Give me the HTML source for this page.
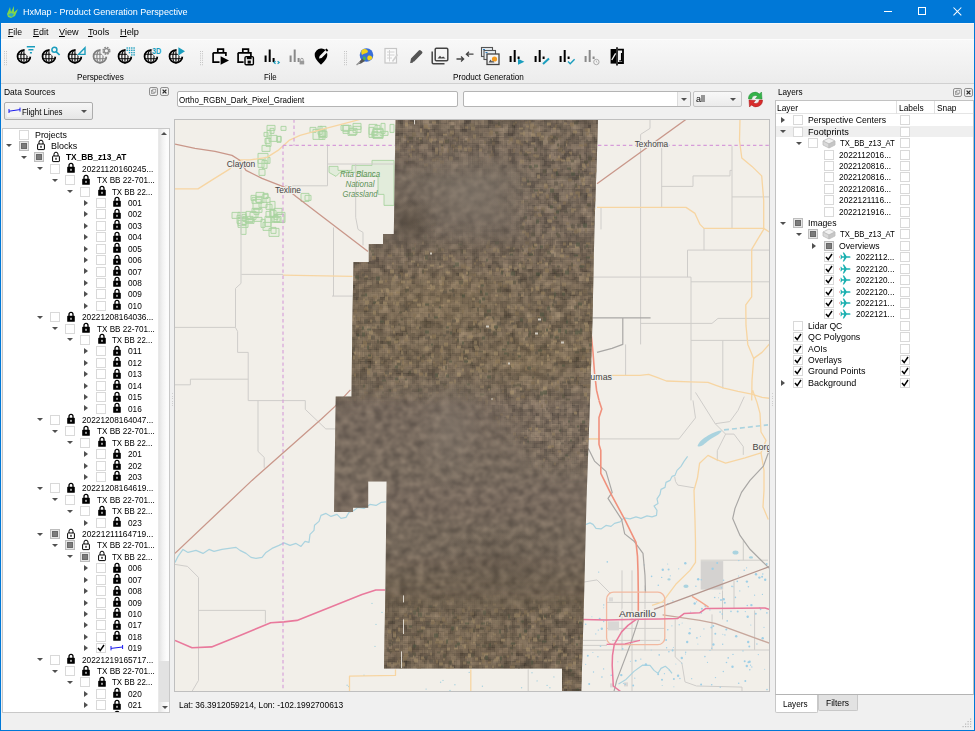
<!DOCTYPE html><html><head><meta charset="utf-8"><title>HxMap</title><style>
*{box-sizing:border-box;margin:0;padding:0}
html,body{width:975px;height:731px;overflow:hidden;background:#f0f0f0;font-family:"Liberation Sans",sans-serif;font-size:9px;color:#000}
.abs{position:absolute}
.t{position:absolute;white-space:nowrap;line-height:12px;height:12px}
#title{position:absolute;left:0;top:0;width:975px;height:23px;background:#0078d7}
#menu{position:absolute;left:1px;top:23px;width:973px;height:16px;background:#f0f0f0;border-top:1px solid #f9f9f9}
#tool{position:absolute;left:1px;top:39px;width:973px;height:45px;background:linear-gradient(#f8f8f8,#f1f1f1 60%,#ececec);border-top:1px solid #fdfdfd;border-bottom:1px solid #d0d0d0}
.cb{position:absolute;width:10px;height:10px;background:#fff;border:1px solid #d9d9d9}
.cbp{position:absolute;width:10px;height:10px;background:#e6e6e6;border:1px solid #bdbdbd}
.cbp:after{content:"";position:absolute;box-sizing:border-box;left:1px;top:1px;width:6px;height:6px;background:#7c7c7c;border:1px solid #686868}
.ar{position:absolute;width:0;height:0}
.ard{border-left:3px solid transparent;border-right:3px solid transparent;border-top:3.6px solid #505050}
.arr{border-top:3.2px solid transparent;border-bottom:3.2px solid transparent;border-left:4px solid #505050}
</style></head><body><div id="title"><svg class="abs" style="left:6px;top:5px" width="13" height="14" viewBox="0 0 13 14"><path d="M1 9 L4 2 L5 7 L8 1 L8 7 L12 4 L9 11 L5 13 L2 12 Z" fill="#7fd44b"/><path d="M2 10 L5 8 L8 9 L6 12 Z" fill="#2aa7c9"/></svg><div class="t" style="left:23.2px;top:5.5px;font-size:9.8px;transform:scaleX(0.9208);transform-origin:0 0;color:#fff;">HxMap - Product Generation Perspective</div><div class="abs" style="left:884px;top:11px;width:8px;height:1px;background:#fff"></div><div class="abs" style="left:918px;top:7px;width:8px;height:8px;border:1px solid #fff"></div><svg class="abs" style="left:952.5px;top:7px" width="9" height="9" viewBox="0 0 9 9"><path d="M0.5 0.5 L8.3 8.3 M8.3 0.5 L0.5 8.3" stroke="#fff" stroke-width="1.05"/></svg></div><div id="menu"><div class="t" style="left:7.2px;top:1.5px;font-size:9.8px;transform:scaleX(0.8866);transform-origin:0 0;"><u>F</u>ile</div><div class="t" style="left:31.8px;top:1.5px;font-size:9.8px;transform:scaleX(0.9120);transform-origin:0 0;"><u>E</u>dit</div><div class="t" style="left:57.5px;top:1.5px;font-size:9.8px;transform:scaleX(0.9258);transform-origin:0 0;"><u>V</u>iew</div><div class="t" style="left:86.8px;top:1.5px;font-size:9.8px;transform:scaleX(0.9267);transform-origin:0 0;"><u>T</u>ools</div><div class="t" style="left:118.6px;top:1.5px;font-size:9.8px;transform:scaleX(0.9378);transform-origin:0 0;"><u>H</u>elp</div></div><div id="tool"><svg class="abs" style="left:3px;top:11px" width="4" height="16"><rect x="0" y="0.0" width="1" height="1" fill="#c4c4c4"/><rect x="2" y="0.0" width="1" height="1" fill="#c4c4c4"/><rect x="0" y="2.2" width="1" height="1" fill="#c4c4c4"/><rect x="2" y="2.2" width="1" height="1" fill="#c4c4c4"/><rect x="0" y="4.4" width="1" height="1" fill="#c4c4c4"/><rect x="2" y="4.4" width="1" height="1" fill="#c4c4c4"/><rect x="0" y="6.6000000000000005" width="1" height="1" fill="#c4c4c4"/><rect x="2" y="6.6000000000000005" width="1" height="1" fill="#c4c4c4"/><rect x="0" y="8.8" width="1" height="1" fill="#c4c4c4"/><rect x="2" y="8.8" width="1" height="1" fill="#c4c4c4"/><rect x="0" y="11.0" width="1" height="1" fill="#c4c4c4"/><rect x="2" y="11.0" width="1" height="1" fill="#c4c4c4"/><rect x="0" y="13.200000000000001" width="1" height="1" fill="#c4c4c4"/><rect x="2" y="13.200000000000001" width="1" height="1" fill="#c4c4c4"/></svg><svg class="abs" style="left:12.5px;top:5.4px" width="24" height="22" viewBox="0 0 24 22"><mask id="gm1"><rect x="0" y="0" width="24" height="22" fill="#fff"/><circle cx="16.6" cy="5.8" r="6" fill="#000"/></mask><g fill="none" stroke="#000" stroke-width="1.8" mask="url(#gm1)"><circle cx="9.95" cy="11.45" r="6.4"/><ellipse cx="9.95" cy="11.45" rx="3.1" ry="6.4" stroke-width="1.05"/><path d="M9.95 5 V17.9 M3.6 9.2 H16.3 M3.6 13.8 H16.3" stroke-width="1.05"/></g><path d="M12.8 1.7 H21 M14.4 4.7 H19.4 M15.9 7.7 H17.9" stroke="#1a9dbd" stroke-width="1.6" fill="none"/></svg><svg class="abs" style="left:38.0px;top:5.4px" width="24" height="22" viewBox="0 0 24 22"><mask id="gm2"><rect x="0" y="0" width="24" height="22" fill="#fff"/><circle cx="16.6" cy="5.8" r="6" fill="#000"/></mask><g fill="none" stroke="#000" stroke-width="1.8" mask="url(#gm2)"><circle cx="9.95" cy="11.45" r="6.4"/><ellipse cx="9.95" cy="11.45" rx="3.1" ry="6.4" stroke-width="1.05"/><path d="M9.95 5 V17.9 M3.6 9.2 H16.3 M3.6 13.8 H16.3" stroke-width="1.05"/></g><circle cx="15.4" cy="4.8" r="2.5" fill="none" stroke="#1a9dbd" stroke-width="1.5"/><path d="M17.3 6.8 L20.6 10" stroke="#1a9dbd" stroke-width="1.7"/></svg><svg class="abs" style="left:63.5px;top:5.4px" width="24" height="22" viewBox="0 0 24 22"><mask id="gm3"><rect x="0" y="0" width="24" height="22" fill="#fff"/><circle cx="16.6" cy="5.8" r="6" fill="#000"/></mask><g fill="none" stroke="#000" stroke-width="1.8" mask="url(#gm3)"><circle cx="9.95" cy="11.45" r="6.4"/><ellipse cx="9.95" cy="11.45" rx="3.1" ry="6.4" stroke-width="1.05"/><path d="M9.95 5 V17.9 M3.6 9.2 H16.3 M3.6 13.8 H16.3" stroke-width="1.05"/></g><path d="M13.4 9.4 L20 2.8 V9.4 Z" fill="none" stroke="#1a9dbd" stroke-width="1.4"/></svg><svg class="abs" style="left:88.5px;top:5.4px" width="24" height="22" viewBox="0 0 24 22"><mask id="gm4"><rect x="0" y="0" width="24" height="22" fill="#fff"/><circle cx="16.6" cy="5.8" r="6" fill="#000"/></mask><g fill="none" stroke="#7d7d7d" stroke-width="1.8" mask="url(#gm4)"><circle cx="9.95" cy="11.45" r="6.4"/><ellipse cx="9.95" cy="11.45" rx="3.1" ry="6.4" stroke-width="1.05"/><path d="M9.95 5 V17.9 M3.6 9.2 H16.3 M3.6 13.8 H16.3" stroke-width="1.05"/></g><circle cx="16.4" cy="5.8" r="3.3" fill="none" stroke="#8c8c8c" stroke-width="1.7" stroke-dasharray="1.7 0.9"/><circle cx="16.4" cy="5.8" r="2.2" fill="none" stroke="#8c8c8c" stroke-width="1.3"/></svg><svg class="abs" style="left:114.0px;top:5.4px" width="24" height="22" viewBox="0 0 24 22"><mask id="gm5"><rect x="0" y="0" width="24" height="22" fill="#fff"/><circle cx="16.6" cy="5.8" r="6" fill="#000"/></mask><g fill="none" stroke="#000" stroke-width="1.8" mask="url(#gm5)"><circle cx="9.95" cy="11.45" r="6.4"/><ellipse cx="9.95" cy="11.45" rx="3.1" ry="6.4" stroke-width="1.05"/><path d="M9.95 5 V17.9 M3.6 9.2 H16.3 M3.6 13.8 H16.3" stroke-width="1.05"/></g><rect x="11.5" y="2.3" width="1.4" height="1.4" fill="#1a9dbd"/><rect x="11.5" y="4.6" width="1.4" height="1.4" fill="#1a9dbd"/><rect x="13.8" y="2.3" width="1.4" height="1.4" fill="#1a9dbd"/><rect x="13.8" y="4.6" width="1.4" height="1.4" fill="#1a9dbd"/><rect x="13.8" y="6.9" width="1.4" height="1.4" fill="#1a9dbd"/><rect x="16.1" y="2.3" width="1.4" height="1.4" fill="#1a9dbd"/><rect x="16.1" y="4.6" width="1.4" height="1.4" fill="#1a9dbd"/><rect x="16.1" y="6.9" width="1.4" height="1.4" fill="#1a9dbd"/><rect x="16.1" y="9.2" width="1.4" height="1.4" fill="#1a9dbd"/><rect x="18.4" y="2.3" width="1.4" height="1.4" fill="#1a9dbd"/><rect x="18.4" y="4.6" width="1.4" height="1.4" fill="#1a9dbd"/><rect x="18.4" y="6.9" width="1.4" height="1.4" fill="#1a9dbd"/><rect x="18.4" y="9.2" width="1.4" height="1.4" fill="#1a9dbd"/></svg><svg class="abs" style="left:139.5px;top:5.4px" width="24" height="22" viewBox="0 0 24 22"><mask id="gm6"><rect x="0" y="0" width="24" height="22" fill="#fff"/><circle cx="16.6" cy="5.8" r="6" fill="#000"/></mask><g fill="none" stroke="#000" stroke-width="1.8" mask="url(#gm6)"><circle cx="9.95" cy="11.45" r="6.4"/><ellipse cx="9.95" cy="11.45" rx="3.1" ry="6.4" stroke-width="1.05"/><path d="M9.95 5 V17.9 M3.6 9.2 H16.3 M3.6 13.8 H16.3" stroke-width="1.05"/></g><text x="11" y="8.9" font-family="Liberation Sans" font-weight="bold" font-size="9.3" fill="#1a9dbd" textLength="9.3" lengthAdjust="spacingAndGlyphs">3D</text></svg><svg class="abs" style="left:165.0px;top:5.4px" width="24" height="22" viewBox="0 0 24 22"><mask id="gm7"><rect x="0" y="0" width="24" height="22" fill="#fff"/><circle cx="16.6" cy="5.8" r="6" fill="#000"/></mask><g fill="none" stroke="#000" stroke-width="1.8" mask="url(#gm7)"><circle cx="9.95" cy="11.45" r="6.4"/><ellipse cx="9.95" cy="11.45" rx="3.1" ry="6.4" stroke-width="1.05"/><path d="M9.95 5 V17.9 M3.6 9.2 H16.3 M3.6 13.8 H16.3" stroke-width="1.05"/></g><path d="M12.4 2.2 L19 6.3 L12.4 10.4 Z" fill="#1a9dbd"/></svg><div class="t" style="left:75.9px;top:30.6px;font-size:9.8px;transform:scaleX(0.8342);transform-origin:0 0;">Perspectives</div><svg class="abs" style="left:199px;top:11px" width="4" height="16"><rect x="0" y="0.0" width="1" height="1" fill="#c4c4c4"/><rect x="2" y="0.0" width="1" height="1" fill="#c4c4c4"/><rect x="0" y="2.2" width="1" height="1" fill="#c4c4c4"/><rect x="2" y="2.2" width="1" height="1" fill="#c4c4c4"/><rect x="0" y="4.4" width="1" height="1" fill="#c4c4c4"/><rect x="2" y="4.4" width="1" height="1" fill="#c4c4c4"/><rect x="0" y="6.6000000000000005" width="1" height="1" fill="#c4c4c4"/><rect x="2" y="6.6000000000000005" width="1" height="1" fill="#c4c4c4"/><rect x="0" y="8.8" width="1" height="1" fill="#c4c4c4"/><rect x="2" y="8.8" width="1" height="1" fill="#c4c4c4"/><rect x="0" y="11.0" width="1" height="1" fill="#c4c4c4"/><rect x="2" y="11.0" width="1" height="1" fill="#c4c4c4"/><rect x="0" y="13.200000000000001" width="1" height="1" fill="#c4c4c4"/><rect x="2" y="13.200000000000001" width="1" height="1" fill="#c4c4c4"/></svg><svg class="abs" style="left:206.5px;top:5.0px" width="24" height="22" viewBox="0 0 24 22"><path d="M5.1 7.8 H17.9 V11 M5.1 7.8 V17.2 H11.5 M9.8 7.8 V4.1 H15.4 V7.8" fill="none" stroke="#000" stroke-width="1.7"/><path d="M12.6 11.2 L21 15.5 L12.6 19.8 Z" fill="#000"/></svg><svg class="abs" style="left:232.0px;top:5.0px" width="24" height="22" viewBox="0 0 24 22"><path d="M5.1 7.8 H17.9 V11 M5.1 7.8 V17.2 H10.6 M9.8 7.8 V4.1 H15.4 V7.8" fill="none" stroke="#000" stroke-width="1.7"/><rect x="12" y="11.6" width="8.4" height="8.2" rx="1.2" fill="none" stroke="#000" stroke-width="1.4"/><rect x="13.8" y="11.6" width="4.8" height="2.6" fill="#000"/><rect x="14.6" y="15.6" width="3.2" height="3" fill="#000"/></svg><svg class="abs" style="left:259.0px;top:5.0px" width="24" height="22" viewBox="0 0 24 22"><path d="M5.6 10.5 V17 M9.7 4.5 V17 M13.6 13 V17" stroke="#000" stroke-width="2" fill="none"/><path d="M15.6 16.3 L14 17.6 L15.6 18.9 M17.6 16.3 L19.2 17.6 L17.6 18.9" stroke="#1a9dbd" stroke-width="1.2" fill="none"/></svg><svg class="abs" style="left:284.0px;top:5.0px" width="24" height="22" viewBox="0 0 24 22"><path d="M5.6 10.5 V17 M9.7 4.5 V17 M13.6 13 V17" stroke="#8a8a8a" stroke-width="2" fill="none"/><rect x="14.6" y="15.8" width="4.6" height="3.6" fill="#9a9a9a"/><path d="M15.6 15.8 V14.6 A1.3 1.3 0 0 1 18.2 14.6 V15.8" stroke="#9a9a9a" stroke-width="1" fill="none"/></svg><svg class="abs" style="left:308.0px;top:5.0px" width="24" height="22" viewBox="0 0 24 22"><path d="M12 3.6 A6.3 6.3 0 0 0 5.7 9.9 C5.7 14.4 12 19.6 12 19.6 C12 19.6 18.3 14.4 18.3 9.9 A6.3 6.3 0 0 0 17.9 7.8 L12.6 13 L10 13.6 L10.6 11 L16.6 5.1 A6.3 6.3 0 0 0 12 3.6 Z" fill="#000"/><path d="M16.8 4.2 L18.6 6" stroke="#000" stroke-width="1.8"/></svg><div class="t" style="left:262.7px;top:30.6px;font-size:9.8px;transform:scaleX(0.8043);transform-origin:0 0;">File</div><svg class="abs" style="left:343px;top:11px" width="4" height="16"><rect x="0" y="0.0" width="1" height="1" fill="#c4c4c4"/><rect x="2" y="0.0" width="1" height="1" fill="#c4c4c4"/><rect x="0" y="2.2" width="1" height="1" fill="#c4c4c4"/><rect x="2" y="2.2" width="1" height="1" fill="#c4c4c4"/><rect x="0" y="4.4" width="1" height="1" fill="#c4c4c4"/><rect x="2" y="4.4" width="1" height="1" fill="#c4c4c4"/><rect x="0" y="6.6000000000000005" width="1" height="1" fill="#c4c4c4"/><rect x="2" y="6.6000000000000005" width="1" height="1" fill="#c4c4c4"/><rect x="0" y="8.8" width="1" height="1" fill="#c4c4c4"/><rect x="2" y="8.8" width="1" height="1" fill="#c4c4c4"/><rect x="0" y="11.0" width="1" height="1" fill="#c4c4c4"/><rect x="2" y="11.0" width="1" height="1" fill="#c4c4c4"/><rect x="0" y="13.200000000000001" width="1" height="1" fill="#c4c4c4"/><rect x="2" y="13.200000000000001" width="1" height="1" fill="#c4c4c4"/></svg><svg class="abs" style="left:351.5px;top:5.0px" width="24" height="22" viewBox="0 0 24 22"><circle cx="13.5" cy="10" r="6.8" fill="#3a6fd8"/><path d="M9 5 C11 3 15 4 15 7 C13 9 11 8 9 10 C8 8 8 6 9 5 Z M15 11 C17 10 19 11 19.5 13 C18 15 16 16 15 15 C14 14 14 12 15 11 Z" fill="#f2d21b"/><path d="M10 12 C11 11 13 12 13 14 C12 15.5 10.5 16 10 15 Z" fill="#4caf50"/><path d="M4 19.5 L9 13.5 L12 16 L8 18.5 Z" fill="#555"/><path d="M3.5 20 L7 17" stroke="#999" stroke-width="1.4"/></svg><svg class="abs" style="left:377.5px;top:5.0px" width="24" height="22" viewBox="0 0 24 22"><rect x="6" y="3.5" width="11.5" height="14.5" fill="#fbfbfb" stroke="#c6c6c6" stroke-width="1.2"/><path d="M8 7 H15.5 M8 10 H15.5 M8 13 H13 M10.5 5 V16.5" stroke="#d2d2d2" stroke-width="1"/><path d="M13.5 16.5 L18.5 9.5" stroke="#cfcfcf" stroke-width="1.6"/></svg><svg class="abs" style="left:402.5px;top:5.0px" width="24" height="22" viewBox="0 0 24 22"><path d="M6.2 17.8 L7 13.6 L14.8 5.4 A1.4 1.4 0 0 1 16.8 5.4 L18 6.6 A1.4 1.4 0 0 1 18 8.6 L10.2 16.6 Z" fill="#555"/><path d="M6.4 17.6 L9 17" stroke="#555" stroke-width="1"/></svg><svg class="abs" style="left:427.0px;top:5.0px" width="24" height="22" viewBox="0 0 24 22"><rect x="7.2" y="3.2" width="12.6" height="12.6" rx="1.2" fill="none" stroke="#444" stroke-width="1.5"/><path d="M4.2 6.5 V17.6 A1.2 1.2 0 0 0 5.4 18.8 H16.5" fill="none" stroke="#444" stroke-width="1.5"/><path d="M9.5 13.6 L12 10.8 L13.6 12.6 L15.2 11.4 L17.6 13.6 Z" fill="#444"/></svg><svg class="abs" style="left:452.0px;top:5.0px" width="24" height="22" viewBox="0 0 24 22"><path d="M3.5 14 H10.5 M8 11.6 L10.6 14 L8 16.4" fill="none" stroke="#444" stroke-width="1.3"/><path d="M20.5 9.2 H13.5 M16 6.8 L13.4 9.2 L16 11.6" fill="none" stroke="#444" stroke-width="1.3"/></svg><svg class="abs" style="left:477.0px;top:5.0px" width="24" height="22" viewBox="0 0 24 22"><rect x="3.5" y="2.5" width="11" height="9" fill="#e8eef2" stroke="#555" stroke-width="1.1"/><rect x="6" y="5.5" width="11.5" height="9" fill="#e8eef2" stroke="#555" stroke-width="1.1"/><rect x="9" y="9" width="12" height="10.5" fill="#f4f4f4" stroke="#444" stroke-width="1.3"/><circle cx="16.5" cy="14" r="2.6" fill="#f39a1e"/><path d="M10.5 17.5 L12.5 14.5 L14 16.5 L15 15.8 L16.5 17.5 Z" fill="#555"/><path d="M5 4.5 H7 M7.5 7.5 H9.5" stroke="#2a7ab8" stroke-width="1.2"/></svg><svg class="abs" style="left:504.0px;top:5.0px" width="24" height="22" viewBox="0 0 24 22"><path d="M5.6 11 V17 M9.7 5 V17 M13.6 11.5 V14" stroke="#000" stroke-width="2" fill="none"/><path d="M13 13.8 L19.4 16.8 L13 19.8 Z" fill="#1a9dbd"/></svg><svg class="abs" style="left:529.0px;top:5.0px" width="24" height="22" viewBox="0 0 24 22"><path d="M5.6 11 V17 M9.7 5 V17 M13.6 11.5 V14" stroke="#000" stroke-width="2" fill="none"/><path d="M13 19 L19 13.5" stroke="#1a9dbd" stroke-width="2"/></svg><svg class="abs" style="left:554.0px;top:5.0px" width="24" height="22" viewBox="0 0 24 22"><path d="M5.6 11 V17 M9.7 5 V17 M13.6 11.5 V14" stroke="#000" stroke-width="2" fill="none"/><path d="M13 16.6 L15.2 18.8 L19.6 14.2" stroke="#1a9dbd" stroke-width="1.4" fill="none"/></svg><svg class="abs" style="left:579.0px;top:5.0px" width="24" height="22" viewBox="0 0 24 22"><path d="M5.6 11 V17 M9.7 5 V17 M13.6 11.5 V14" stroke="#8a8a8a" stroke-width="2" fill="none"/><circle cx="16.4" cy="17" r="2.7" fill="#f4f4f4" stroke="#aaa" stroke-width="1"/><path d="M16.4 15.6 V17 L17.4 17.8" stroke="#aaa" stroke-width="0.8" fill="none"/></svg><svg class="abs" style="left:603.5px;top:5.0px" width="24" height="22" viewBox="0 0 24 22"><path d="M5.6 4 H11 V18.6 H5.6 Z" fill="#000"/><path d="M12 2.2 V20.4" stroke="#000" stroke-width="1.6"/><path d="M13 4.6 H18 V18 H13" fill="none" stroke="#000" stroke-width="1.8"/><path d="M6.8 15 L10.6 8.4" stroke="#f2f2f2" stroke-width="1.3"/><path d="M14.2 15.8 H16.6 V8" stroke="#000" stroke-width="1.3" fill="none"/></svg><div class="t" style="left:452.4px;top:30.6px;font-size:9.8px;transform:scaleX(0.8332);transform-origin:0 0;">Product Generation</div></div><div class="t" style="left:4.1px;top:85.8px;font-size:9.8px;transform:scaleX(0.8641);transform-origin:0 0;">Data Sources</div><svg class="abs" style="left:149px;top:87px" width="21" height="10" viewBox="0 0 21 10"><rect x="0.5" y="0.5" width="8" height="8" rx="1.6" fill="none" stroke="#8e8e8e" stroke-width="1"/><rect x="2.4" y="3.6" width="3" height="3" fill="#f0f0f0" stroke="#8a8a8a" stroke-width="0.7"/><rect x="3.8" y="2.2" width="3" height="3" fill="#f0f0f0" stroke="#8a8a8a" stroke-width="0.7"/><rect x="11.5" y="0.5" width="8" height="8" rx="1.6" fill="none" stroke="#8e8e8e" stroke-width="1"/><path d="M13.6 2.6 L17.4 6.4 M17.4 2.6 L13.6 6.4" stroke="#2a2a2a" stroke-width="1.3"/></svg><div class="abs" style="left:4px;top:102px;width:89px;height:18px;border:1px solid #adadad;border-radius:2px;background:linear-gradient(#f6f6f6,#e6e6e6)"></div><div class="abs" style="left:7px;top:105px;width:14px;height:12px;background:#f4f4f4"></div><svg class="abs" style="left:8px;top:106px" width="14" height="9" viewBox="0 0 14 9"><path d="M1 3 V7 M1 5.2 L12 3.6 M12 1.6 V5.6" stroke="#1a1aee" stroke-width="1" fill="none"/></svg><div class="t" style="left:22.0px;top:106.0px;font-size:9.8px;transform:scaleX(0.8082);transform-origin:0 0;">Flight Lines</div><div class="ar ard" style="left:81px;top:110px"></div><div class="abs" style="left:2px;top:128px;width:168px;height:585px;background:#fff;border:1px solid #c8c8c8;overflow:hidden"><div class="cb" style="left:16.0px;top:0.5px"></div><div class="t" style="left:31.5px;top:-0.5px;font-size:9.8px;transform:scaleX(0.9011);transform-origin:0 0;">Projects</div><div class="ar ard" style="left:3.0px;top:15.414999999999992px"></div><div class="cbp" style="left:16.0px;top:11.9px"></div><svg class="abs" style="left:32.5px;top:10.414999999999992px" width="10" height="12" viewBox="0 0 10 12"><path d="M3 5 V3.2 A2 2 0 0 1 7 3.2 V5" fill="none" stroke="#000" stroke-width="1"/><rect x="1.6" y="5" width="6.8" height="5.6" rx="0.5" fill="none" stroke="#000" stroke-width="1"/><rect x="4.4" y="6.8" width="1.2" height="2" fill="#000"/></svg><div class="t" style="left:48.0px;top:10.9px;font-size:9.8px;transform:scaleX(0.9112);transform-origin:0 0;">Blocks</div><div class="ar ard" style="left:18.3px;top:26.829999999999984px"></div><div class="cbp" style="left:31.3px;top:23.3px"></div><svg class="abs" style="left:47.8px;top:21.829999999999984px" width="10" height="12" viewBox="0 0 10 12"><path d="M3 5 V3.2 A2 2 0 0 1 7 3.2 V5" fill="none" stroke="#000" stroke-width="1"/><rect x="1.6" y="5" width="6.8" height="5.6" rx="0.5" fill="none" stroke="#000" stroke-width="1"/><rect x="4.4" y="6.8" width="1.2" height="2" fill="#000"/></svg><div class="t" style="left:63.3px;top:22.3px;font-size:9.8px;transform:scaleX(0.8488);transform-origin:0 0;font-weight:bold;">TX_BB_z13_AT</div><div class="ar ard" style="left:33.6px;top:38.245000000000005px"></div><div class="cb" style="left:46.6px;top:34.7px"></div><svg class="abs" style="left:63.099999999999994px;top:33.245000000000005px" width="10" height="12" viewBox="0 0 10 12"><path d="M3 5 V3.4 A2 2 0 0 1 7 3.4 V5" fill="none" stroke="#000" stroke-width="1.3"/><rect x="1.2" y="4.8" width="7.6" height="6" rx="0.6" fill="#000"/><rect x="4.4" y="6.8" width="1.2" height="2" fill="#fff"/></svg><div class="t" style="left:78.6px;top:33.7px;font-size:9.8px;transform:scaleX(0.8515);transform-origin:0 0;">20221120160245...</div><div class="ar ard" style="left:48.900000000000006px;top:49.66px"></div><div class="cb" style="left:61.9px;top:46.2px"></div><svg class="abs" style="left:78.4px;top:44.66px" width="10" height="12" viewBox="0 0 10 12"><path d="M3 5 V3.4 A2 2 0 0 1 7 3.4 V5" fill="none" stroke="#000" stroke-width="1.3"/><rect x="1.2" y="4.8" width="7.6" height="6" rx="0.6" fill="#000"/><rect x="4.4" y="6.8" width="1.2" height="2" fill="#fff"/></svg><div class="t" style="left:93.9px;top:45.2px;font-size:9.8px;transform:scaleX(0.8290);transform-origin:0 0;">TX BB 22-701...</div><div class="ar ard" style="left:64.2px;top:61.07499999999999px"></div><div class="cb" style="left:77.2px;top:57.6px"></div><svg class="abs" style="left:93.7px;top:56.07499999999999px" width="10" height="12" viewBox="0 0 10 12"><path d="M3 5 V3.4 A2 2 0 0 1 7 3.4 V5" fill="none" stroke="#000" stroke-width="1.3"/><rect x="1.2" y="4.8" width="7.6" height="6" rx="0.6" fill="#000"/><rect x="4.4" y="6.8" width="1.2" height="2" fill="#fff"/></svg><div class="t" style="left:109.2px;top:56.6px;font-size:9.8px;transform:scaleX(0.8062);transform-origin:0 0;">TX BB 22...</div><div class="ar arr" style="left:81.0px;top:70.99000000000001px"></div><div class="cb" style="left:92.5px;top:69.0px"></div><svg class="abs" style="left:109.0px;top:67.49000000000001px" width="10" height="12" viewBox="0 0 10 12"><path d="M3 5 V3.4 A2 2 0 0 1 7 3.4 V5" fill="none" stroke="#000" stroke-width="1.3"/><rect x="1.2" y="4.8" width="7.6" height="6" rx="0.6" fill="#000"/><rect x="4.4" y="6.8" width="1.2" height="2" fill="#fff"/></svg><div class="t" style="left:124.5px;top:68.0px;font-size:9.8px;transform:scaleX(0.8441);transform-origin:0 0;">001</div><div class="ar arr" style="left:81.0px;top:82.405px"></div><div class="cb" style="left:92.5px;top:80.4px"></div><svg class="abs" style="left:109.0px;top:78.905px" width="10" height="12" viewBox="0 0 10 12"><path d="M3 5 V3.4 A2 2 0 0 1 7 3.4 V5" fill="none" stroke="#000" stroke-width="1.3"/><rect x="1.2" y="4.8" width="7.6" height="6" rx="0.6" fill="#000"/><rect x="4.4" y="6.8" width="1.2" height="2" fill="#fff"/></svg><div class="t" style="left:124.5px;top:79.4px;font-size:9.8px;transform:scaleX(0.8441);transform-origin:0 0;">002</div><div class="ar arr" style="left:81.0px;top:93.82px"></div><div class="cb" style="left:92.5px;top:91.8px"></div><svg class="abs" style="left:109.0px;top:90.32px" width="10" height="12" viewBox="0 0 10 12"><path d="M3 5 V3.4 A2 2 0 0 1 7 3.4 V5" fill="none" stroke="#000" stroke-width="1.3"/><rect x="1.2" y="4.8" width="7.6" height="6" rx="0.6" fill="#000"/><rect x="4.4" y="6.8" width="1.2" height="2" fill="#fff"/></svg><div class="t" style="left:124.5px;top:90.8px;font-size:9.8px;transform:scaleX(0.8441);transform-origin:0 0;">003</div><div class="ar arr" style="left:81.0px;top:105.23499999999999px"></div><div class="cb" style="left:92.5px;top:103.2px"></div><svg class="abs" style="left:109.0px;top:101.73499999999999px" width="10" height="12" viewBox="0 0 10 12"><path d="M3 5 V3.4 A2 2 0 0 1 7 3.4 V5" fill="none" stroke="#000" stroke-width="1.3"/><rect x="1.2" y="4.8" width="7.6" height="6" rx="0.6" fill="#000"/><rect x="4.4" y="6.8" width="1.2" height="2" fill="#fff"/></svg><div class="t" style="left:124.5px;top:102.2px;font-size:9.8px;transform:scaleX(0.8441);transform-origin:0 0;">004</div><div class="ar arr" style="left:81.0px;top:116.64999999999998px"></div><div class="cb" style="left:92.5px;top:114.6px"></div><svg class="abs" style="left:109.0px;top:113.14999999999998px" width="10" height="12" viewBox="0 0 10 12"><path d="M3 5 V3.4 A2 2 0 0 1 7 3.4 V5" fill="none" stroke="#000" stroke-width="1.3"/><rect x="1.2" y="4.8" width="7.6" height="6" rx="0.6" fill="#000"/><rect x="4.4" y="6.8" width="1.2" height="2" fill="#fff"/></svg><div class="t" style="left:124.5px;top:113.6px;font-size:9.8px;transform:scaleX(0.8441);transform-origin:0 0;">005</div><div class="ar arr" style="left:81.0px;top:128.065px"></div><div class="cb" style="left:92.5px;top:126.1px"></div><svg class="abs" style="left:109.0px;top:124.565px" width="10" height="12" viewBox="0 0 10 12"><path d="M3 5 V3.4 A2 2 0 0 1 7 3.4 V5" fill="none" stroke="#000" stroke-width="1.3"/><rect x="1.2" y="4.8" width="7.6" height="6" rx="0.6" fill="#000"/><rect x="4.4" y="6.8" width="1.2" height="2" fill="#fff"/></svg><div class="t" style="left:124.5px;top:125.1px;font-size:9.8px;transform:scaleX(0.8441);transform-origin:0 0;">006</div><div class="ar arr" style="left:81.0px;top:139.48000000000002px"></div><div class="cb" style="left:92.5px;top:137.5px"></div><svg class="abs" style="left:109.0px;top:135.98000000000002px" width="10" height="12" viewBox="0 0 10 12"><path d="M3 5 V3.4 A2 2 0 0 1 7 3.4 V5" fill="none" stroke="#000" stroke-width="1.3"/><rect x="1.2" y="4.8" width="7.6" height="6" rx="0.6" fill="#000"/><rect x="4.4" y="6.8" width="1.2" height="2" fill="#fff"/></svg><div class="t" style="left:124.5px;top:136.5px;font-size:9.8px;transform:scaleX(0.8441);transform-origin:0 0;">007</div><div class="ar arr" style="left:81.0px;top:150.89499999999998px"></div><div class="cb" style="left:92.5px;top:148.9px"></div><svg class="abs" style="left:109.0px;top:147.39499999999998px" width="10" height="12" viewBox="0 0 10 12"><path d="M3 5 V3.4 A2 2 0 0 1 7 3.4 V5" fill="none" stroke="#000" stroke-width="1.3"/><rect x="1.2" y="4.8" width="7.6" height="6" rx="0.6" fill="#000"/><rect x="4.4" y="6.8" width="1.2" height="2" fill="#fff"/></svg><div class="t" style="left:124.5px;top:147.9px;font-size:9.8px;transform:scaleX(0.8441);transform-origin:0 0;">008</div><div class="ar arr" style="left:81.0px;top:162.31px"></div><div class="cb" style="left:92.5px;top:160.3px"></div><svg class="abs" style="left:109.0px;top:158.81px" width="10" height="12" viewBox="0 0 10 12"><path d="M3 5 V3.4 A2 2 0 0 1 7 3.4 V5" fill="none" stroke="#000" stroke-width="1.3"/><rect x="1.2" y="4.8" width="7.6" height="6" rx="0.6" fill="#000"/><rect x="4.4" y="6.8" width="1.2" height="2" fill="#fff"/></svg><div class="t" style="left:124.5px;top:159.3px;font-size:9.8px;transform:scaleX(0.8441);transform-origin:0 0;">009</div><div class="ar arr" style="left:81.0px;top:173.72500000000002px"></div><div class="cb" style="left:92.5px;top:171.7px"></div><svg class="abs" style="left:109.0px;top:170.22500000000002px" width="10" height="12" viewBox="0 0 10 12"><path d="M3 5 V3.4 A2 2 0 0 1 7 3.4 V5" fill="none" stroke="#000" stroke-width="1.3"/><rect x="1.2" y="4.8" width="7.6" height="6" rx="0.6" fill="#000"/><rect x="4.4" y="6.8" width="1.2" height="2" fill="#fff"/></svg><div class="t" style="left:124.5px;top:170.7px;font-size:9.8px;transform:scaleX(0.8441);transform-origin:0 0;">010</div><div class="ar ard" style="left:33.6px;top:186.64px"></div><div class="cb" style="left:46.6px;top:183.1px"></div><svg class="abs" style="left:63.099999999999994px;top:181.64px" width="10" height="12" viewBox="0 0 10 12"><path d="M3 5 V3.4 A2 2 0 0 1 7 3.4 V5" fill="none" stroke="#000" stroke-width="1.3"/><rect x="1.2" y="4.8" width="7.6" height="6" rx="0.6" fill="#000"/><rect x="4.4" y="6.8" width="1.2" height="2" fill="#fff"/></svg><div class="t" style="left:78.6px;top:182.1px;font-size:9.8px;transform:scaleX(0.8441);transform-origin:0 0;">20221208164036...</div><div class="ar ard" style="left:48.900000000000006px;top:198.05499999999995px"></div><div class="cb" style="left:61.9px;top:194.6px"></div><svg class="abs" style="left:78.4px;top:193.05499999999995px" width="10" height="12" viewBox="0 0 10 12"><path d="M3 5 V3.4 A2 2 0 0 1 7 3.4 V5" fill="none" stroke="#000" stroke-width="1.3"/><rect x="1.2" y="4.8" width="7.6" height="6" rx="0.6" fill="#000"/><rect x="4.4" y="6.8" width="1.2" height="2" fill="#fff"/></svg><div class="t" style="left:93.9px;top:193.6px;font-size:9.8px;transform:scaleX(0.8290);transform-origin:0 0;">TX BB 22-701...</div><div class="ar ard" style="left:64.2px;top:209.46999999999997px"></div><div class="cb" style="left:77.2px;top:206.0px"></div><svg class="abs" style="left:93.7px;top:204.46999999999997px" width="10" height="12" viewBox="0 0 10 12"><path d="M3 5 V3.4 A2 2 0 0 1 7 3.4 V5" fill="none" stroke="#000" stroke-width="1.3"/><rect x="1.2" y="4.8" width="7.6" height="6" rx="0.6" fill="#000"/><rect x="4.4" y="6.8" width="1.2" height="2" fill="#fff"/></svg><div class="t" style="left:109.2px;top:205.0px;font-size:9.8px;transform:scaleX(0.8062);transform-origin:0 0;">TX BB 22...</div><div class="ar arr" style="left:81.0px;top:219.385px"></div><div class="cb" style="left:92.5px;top:217.4px"></div><svg class="abs" style="left:109.0px;top:215.885px" width="10" height="12" viewBox="0 0 10 12"><path d="M3 5 V3.4 A2 2 0 0 1 7 3.4 V5" fill="none" stroke="#000" stroke-width="1.3"/><rect x="1.2" y="4.8" width="7.6" height="6" rx="0.6" fill="#000"/><rect x="4.4" y="6.8" width="1.2" height="2" fill="#fff"/></svg><div class="t" style="left:124.5px;top:216.4px;font-size:9.8px;transform:scaleX(0.8834);transform-origin:0 0;">011</div><div class="ar arr" style="left:81.0px;top:230.79999999999995px"></div><div class="cb" style="left:92.5px;top:228.8px"></div><svg class="abs" style="left:109.0px;top:227.29999999999995px" width="10" height="12" viewBox="0 0 10 12"><path d="M3 5 V3.4 A2 2 0 0 1 7 3.4 V5" fill="none" stroke="#000" stroke-width="1.3"/><rect x="1.2" y="4.8" width="7.6" height="6" rx="0.6" fill="#000"/><rect x="4.4" y="6.8" width="1.2" height="2" fill="#fff"/></svg><div class="t" style="left:124.5px;top:227.8px;font-size:9.8px;transform:scaleX(0.8441);transform-origin:0 0;">012</div><div class="ar arr" style="left:81.0px;top:242.21499999999997px"></div><div class="cb" style="left:92.5px;top:240.2px"></div><svg class="abs" style="left:109.0px;top:238.71499999999997px" width="10" height="12" viewBox="0 0 10 12"><path d="M3 5 V3.4 A2 2 0 0 1 7 3.4 V5" fill="none" stroke="#000" stroke-width="1.3"/><rect x="1.2" y="4.8" width="7.6" height="6" rx="0.6" fill="#000"/><rect x="4.4" y="6.8" width="1.2" height="2" fill="#fff"/></svg><div class="t" style="left:124.5px;top:239.2px;font-size:9.8px;transform:scaleX(0.8441);transform-origin:0 0;">013</div><div class="ar arr" style="left:81.0px;top:253.63px"></div><div class="cb" style="left:92.5px;top:251.6px"></div><svg class="abs" style="left:109.0px;top:250.13px" width="10" height="12" viewBox="0 0 10 12"><path d="M3 5 V3.4 A2 2 0 0 1 7 3.4 V5" fill="none" stroke="#000" stroke-width="1.3"/><rect x="1.2" y="4.8" width="7.6" height="6" rx="0.6" fill="#000"/><rect x="4.4" y="6.8" width="1.2" height="2" fill="#fff"/></svg><div class="t" style="left:124.5px;top:250.6px;font-size:9.8px;transform:scaleX(0.8441);transform-origin:0 0;">014</div><div class="ar arr" style="left:81.0px;top:265.04499999999996px"></div><div class="cb" style="left:92.5px;top:263.0px"></div><svg class="abs" style="left:109.0px;top:261.54499999999996px" width="10" height="12" viewBox="0 0 10 12"><path d="M3 5 V3.4 A2 2 0 0 1 7 3.4 V5" fill="none" stroke="#000" stroke-width="1.3"/><rect x="1.2" y="4.8" width="7.6" height="6" rx="0.6" fill="#000"/><rect x="4.4" y="6.8" width="1.2" height="2" fill="#fff"/></svg><div class="t" style="left:124.5px;top:262.0px;font-size:9.8px;transform:scaleX(0.8441);transform-origin:0 0;">015</div><div class="ar arr" style="left:81.0px;top:276.46px"></div><div class="cb" style="left:92.5px;top:274.5px"></div><svg class="abs" style="left:109.0px;top:272.96px" width="10" height="12" viewBox="0 0 10 12"><path d="M3 5 V3.4 A2 2 0 0 1 7 3.4 V5" fill="none" stroke="#000" stroke-width="1.3"/><rect x="1.2" y="4.8" width="7.6" height="6" rx="0.6" fill="#000"/><rect x="4.4" y="6.8" width="1.2" height="2" fill="#fff"/></svg><div class="t" style="left:124.5px;top:273.5px;font-size:9.8px;transform:scaleX(0.8441);transform-origin:0 0;">016</div><div class="ar ard" style="left:33.6px;top:289.375px"></div><div class="cb" style="left:46.6px;top:285.9px"></div><svg class="abs" style="left:63.099999999999994px;top:284.375px" width="10" height="12" viewBox="0 0 10 12"><path d="M3 5 V3.4 A2 2 0 0 1 7 3.4 V5" fill="none" stroke="#000" stroke-width="1.3"/><rect x="1.2" y="4.8" width="7.6" height="6" rx="0.6" fill="#000"/><rect x="4.4" y="6.8" width="1.2" height="2" fill="#fff"/></svg><div class="t" style="left:78.6px;top:284.9px;font-size:9.8px;transform:scaleX(0.8441);transform-origin:0 0;">20221208164047...</div><div class="ar ard" style="left:48.900000000000006px;top:300.78999999999996px"></div><div class="cb" style="left:61.9px;top:297.3px"></div><svg class="abs" style="left:78.4px;top:295.78999999999996px" width="10" height="12" viewBox="0 0 10 12"><path d="M3 5 V3.4 A2 2 0 0 1 7 3.4 V5" fill="none" stroke="#000" stroke-width="1.3"/><rect x="1.2" y="4.8" width="7.6" height="6" rx="0.6" fill="#000"/><rect x="4.4" y="6.8" width="1.2" height="2" fill="#fff"/></svg><div class="t" style="left:93.9px;top:296.3px;font-size:9.8px;transform:scaleX(0.8290);transform-origin:0 0;">TX BB 22-701...</div><div class="ar ard" style="left:64.2px;top:312.205px"></div><div class="cb" style="left:77.2px;top:308.7px"></div><svg class="abs" style="left:93.7px;top:307.205px" width="10" height="12" viewBox="0 0 10 12"><path d="M3 5 V3.4 A2 2 0 0 1 7 3.4 V5" fill="none" stroke="#000" stroke-width="1.3"/><rect x="1.2" y="4.8" width="7.6" height="6" rx="0.6" fill="#000"/><rect x="4.4" y="6.8" width="1.2" height="2" fill="#fff"/></svg><div class="t" style="left:109.2px;top:307.7px;font-size:9.8px;transform:scaleX(0.8062);transform-origin:0 0;">TX BB 22...</div><div class="ar arr" style="left:81.0px;top:322.12px"></div><div class="cb" style="left:92.5px;top:320.1px"></div><svg class="abs" style="left:109.0px;top:318.62px" width="10" height="12" viewBox="0 0 10 12"><path d="M3 5 V3.4 A2 2 0 0 1 7 3.4 V5" fill="none" stroke="#000" stroke-width="1.3"/><rect x="1.2" y="4.8" width="7.6" height="6" rx="0.6" fill="#000"/><rect x="4.4" y="6.8" width="1.2" height="2" fill="#fff"/></svg><div class="t" style="left:124.5px;top:319.1px;font-size:9.8px;transform:scaleX(0.8441);transform-origin:0 0;">201</div><div class="ar arr" style="left:81.0px;top:333.53499999999997px"></div><div class="cb" style="left:92.5px;top:331.5px"></div><svg class="abs" style="left:109.0px;top:330.03499999999997px" width="10" height="12" viewBox="0 0 10 12"><path d="M3 5 V3.4 A2 2 0 0 1 7 3.4 V5" fill="none" stroke="#000" stroke-width="1.3"/><rect x="1.2" y="4.8" width="7.6" height="6" rx="0.6" fill="#000"/><rect x="4.4" y="6.8" width="1.2" height="2" fill="#fff"/></svg><div class="t" style="left:124.5px;top:330.5px;font-size:9.8px;transform:scaleX(0.8441);transform-origin:0 0;">202</div><div class="ar arr" style="left:81.0px;top:344.95px"></div><div class="cb" style="left:92.5px;top:342.9px"></div><svg class="abs" style="left:109.0px;top:341.45px" width="10" height="12" viewBox="0 0 10 12"><path d="M3 5 V3.4 A2 2 0 0 1 7 3.4 V5" fill="none" stroke="#000" stroke-width="1.3"/><rect x="1.2" y="4.8" width="7.6" height="6" rx="0.6" fill="#000"/><rect x="4.4" y="6.8" width="1.2" height="2" fill="#fff"/></svg><div class="t" style="left:124.5px;top:341.9px;font-size:9.8px;transform:scaleX(0.8441);transform-origin:0 0;">203</div><div class="ar ard" style="left:33.6px;top:357.86499999999995px"></div><div class="cb" style="left:46.6px;top:354.4px"></div><svg class="abs" style="left:63.099999999999994px;top:352.86499999999995px" width="10" height="12" viewBox="0 0 10 12"><path d="M3 5 V3.4 A2 2 0 0 1 7 3.4 V5" fill="none" stroke="#000" stroke-width="1.3"/><rect x="1.2" y="4.8" width="7.6" height="6" rx="0.6" fill="#000"/><rect x="4.4" y="6.8" width="1.2" height="2" fill="#fff"/></svg><div class="t" style="left:78.6px;top:353.4px;font-size:9.8px;transform:scaleX(0.8441);transform-origin:0 0;">20221208164619...</div><div class="ar ard" style="left:48.900000000000006px;top:369.28px"></div><div class="cb" style="left:61.9px;top:365.8px"></div><svg class="abs" style="left:78.4px;top:364.28px" width="10" height="12" viewBox="0 0 10 12"><path d="M3 5 V3.4 A2 2 0 0 1 7 3.4 V5" fill="none" stroke="#000" stroke-width="1.3"/><rect x="1.2" y="4.8" width="7.6" height="6" rx="0.6" fill="#000"/><rect x="4.4" y="6.8" width="1.2" height="2" fill="#fff"/></svg><div class="t" style="left:93.9px;top:364.8px;font-size:9.8px;transform:scaleX(0.8290);transform-origin:0 0;">TX BB 22-701...</div><div class="ar ard" style="left:64.2px;top:380.695px"></div><div class="cb" style="left:77.2px;top:377.2px"></div><svg class="abs" style="left:93.7px;top:375.695px" width="10" height="12" viewBox="0 0 10 12"><path d="M3 5 V3.4 A2 2 0 0 1 7 3.4 V5" fill="none" stroke="#000" stroke-width="1.3"/><rect x="1.2" y="4.8" width="7.6" height="6" rx="0.6" fill="#000"/><rect x="4.4" y="6.8" width="1.2" height="2" fill="#fff"/></svg><div class="t" style="left:109.2px;top:376.2px;font-size:9.8px;transform:scaleX(0.8062);transform-origin:0 0;">TX BB 22...</div><div class="ar arr" style="left:81.0px;top:390.6099999999999px"></div><div class="cb" style="left:92.5px;top:388.6px"></div><svg class="abs" style="left:109.0px;top:387.1099999999999px" width="10" height="12" viewBox="0 0 10 12"><path d="M3 5 V3.4 A2 2 0 0 1 7 3.4 V5" fill="none" stroke="#000" stroke-width="1.3"/><rect x="1.2" y="4.8" width="7.6" height="6" rx="0.6" fill="#000"/><rect x="4.4" y="6.8" width="1.2" height="2" fill="#fff"/></svg><div class="t" style="left:124.5px;top:387.6px;font-size:9.8px;transform:scaleX(0.8441);transform-origin:0 0;">023</div><div class="ar ard" style="left:33.6px;top:403.525px"></div><div class="cbp" style="left:46.6px;top:400.0px"></div><svg class="abs" style="left:63.099999999999994px;top:398.525px" width="10" height="12" viewBox="0 0 10 12"><path d="M3 5 V3.2 A2 2 0 0 1 7 3.2 V5" fill="none" stroke="#000" stroke-width="1"/><rect x="1.6" y="5" width="6.8" height="5.6" rx="0.5" fill="none" stroke="#000" stroke-width="1"/><rect x="4.4" y="6.8" width="1.2" height="2" fill="#000"/></svg><div class="t" style="left:78.6px;top:399.0px;font-size:9.8px;transform:scaleX(0.8589);transform-origin:0 0;">20221211164719...</div><div class="ar ard" style="left:48.900000000000006px;top:414.93999999999994px"></div><div class="cbp" style="left:61.9px;top:411.4px"></div><svg class="abs" style="left:78.4px;top:409.93999999999994px" width="10" height="12" viewBox="0 0 10 12"><path d="M3 5 V3.2 A2 2 0 0 1 7 3.2 V5" fill="none" stroke="#000" stroke-width="1"/><rect x="1.6" y="5" width="6.8" height="5.6" rx="0.5" fill="none" stroke="#000" stroke-width="1"/><rect x="4.4" y="6.8" width="1.2" height="2" fill="#000"/></svg><div class="t" style="left:93.9px;top:410.4px;font-size:9.8px;transform:scaleX(0.8290);transform-origin:0 0;">TX BB 22-701...</div><div class="ar ard" style="left:64.2px;top:426.355px"></div><div class="cbp" style="left:77.2px;top:422.9px"></div><svg class="abs" style="left:93.7px;top:421.355px" width="10" height="12" viewBox="0 0 10 12"><path d="M3 5 V3.2 A2 2 0 0 1 7 3.2 V5" fill="none" stroke="#000" stroke-width="1"/><rect x="1.6" y="5" width="6.8" height="5.6" rx="0.5" fill="none" stroke="#000" stroke-width="1"/><rect x="4.4" y="6.8" width="1.2" height="2" fill="#000"/></svg><div class="t" style="left:109.2px;top:421.9px;font-size:9.8px;transform:scaleX(0.8062);transform-origin:0 0;">TX BB 22...</div><div class="ar arr" style="left:81.0px;top:436.27px"></div><div class="cb" style="left:92.5px;top:434.3px"></div><svg class="abs" style="left:109.0px;top:432.77px" width="10" height="12" viewBox="0 0 10 12"><path d="M3 5 V3.4 A2 2 0 0 1 7 3.4 V5" fill="none" stroke="#000" stroke-width="1.3"/><rect x="1.2" y="4.8" width="7.6" height="6" rx="0.6" fill="#000"/><rect x="4.4" y="6.8" width="1.2" height="2" fill="#fff"/></svg><div class="t" style="left:124.5px;top:433.3px;font-size:9.8px;transform:scaleX(0.8441);transform-origin:0 0;">006</div><div class="ar arr" style="left:81.0px;top:447.68499999999995px"></div><div class="cb" style="left:92.5px;top:445.7px"></div><svg class="abs" style="left:109.0px;top:444.18499999999995px" width="10" height="12" viewBox="0 0 10 12"><path d="M3 5 V3.4 A2 2 0 0 1 7 3.4 V5" fill="none" stroke="#000" stroke-width="1.3"/><rect x="1.2" y="4.8" width="7.6" height="6" rx="0.6" fill="#000"/><rect x="4.4" y="6.8" width="1.2" height="2" fill="#fff"/></svg><div class="t" style="left:124.5px;top:444.7px;font-size:9.8px;transform:scaleX(0.8441);transform-origin:0 0;">007</div><div class="ar arr" style="left:81.0px;top:459.0999999999999px"></div><div class="cb" style="left:92.5px;top:457.1px"></div><svg class="abs" style="left:109.0px;top:455.5999999999999px" width="10" height="12" viewBox="0 0 10 12"><path d="M3 5 V3.4 A2 2 0 0 1 7 3.4 V5" fill="none" stroke="#000" stroke-width="1.3"/><rect x="1.2" y="4.8" width="7.6" height="6" rx="0.6" fill="#000"/><rect x="4.4" y="6.8" width="1.2" height="2" fill="#fff"/></svg><div class="t" style="left:124.5px;top:456.1px;font-size:9.8px;transform:scaleX(0.8441);transform-origin:0 0;">008</div><div class="ar arr" style="left:81.0px;top:470.515px"></div><div class="cb" style="left:92.5px;top:468.5px"></div><svg class="abs" style="left:109.0px;top:467.015px" width="10" height="12" viewBox="0 0 10 12"><path d="M3 5 V3.4 A2 2 0 0 1 7 3.4 V5" fill="none" stroke="#000" stroke-width="1.3"/><rect x="1.2" y="4.8" width="7.6" height="6" rx="0.6" fill="#000"/><rect x="4.4" y="6.8" width="1.2" height="2" fill="#fff"/></svg><div class="t" style="left:124.5px;top:467.5px;font-size:9.8px;transform:scaleX(0.8441);transform-origin:0 0;">009</div><div class="ar arr" style="left:81.0px;top:481.92999999999995px"></div><div class="cb" style="left:92.5px;top:479.9px"></div><svg class="abs" style="left:109.0px;top:478.42999999999995px" width="10" height="12" viewBox="0 0 10 12"><path d="M3 5 V3.4 A2 2 0 0 1 7 3.4 V5" fill="none" stroke="#000" stroke-width="1.3"/><rect x="1.2" y="4.8" width="7.6" height="6" rx="0.6" fill="#000"/><rect x="4.4" y="6.8" width="1.2" height="2" fill="#fff"/></svg><div class="t" style="left:124.5px;top:478.9px;font-size:9.8px;transform:scaleX(0.8441);transform-origin:0 0;">010</div><div class="ar arr" style="left:81.0px;top:493.345px"></div><div class="cb" style="left:92.5px;top:491.3px"></div><svg class="abs" style="left:109.0px;top:489.845px" width="10" height="12" viewBox="0 0 10 12"><path d="M3 5 V3.4 A2 2 0 0 1 7 3.4 V5" fill="none" stroke="#000" stroke-width="1.3"/><rect x="1.2" y="4.8" width="7.6" height="6" rx="0.6" fill="#000"/><rect x="4.4" y="6.8" width="1.2" height="2" fill="#fff"/></svg><div class="t" style="left:124.5px;top:490.3px;font-size:9.8px;transform:scaleX(0.8441);transform-origin:0 0;">017</div><div class="ar arr" style="left:81.0px;top:504.76px"></div><div class="cb" style="left:92.5px;top:502.8px"></div><svg class="abs" style="left:109.0px;top:501.26px" width="10" height="12" viewBox="0 0 10 12"><path d="M3 5 V3.4 A2 2 0 0 1 7 3.4 V5" fill="none" stroke="#000" stroke-width="1.3"/><rect x="1.2" y="4.8" width="7.6" height="6" rx="0.6" fill="#000"/><rect x="4.4" y="6.8" width="1.2" height="2" fill="#fff"/></svg><div class="t" style="left:124.5px;top:501.8px;font-size:9.8px;transform:scaleX(0.8441);transform-origin:0 0;">018</div><div class="ar arr" style="left:81.0px;top:516.175px"></div><div class="cb" style="left:92.5px;top:514.2px"></div><svg class="abs" style="left:92.5px;top:514.175px" width="10" height="10" viewBox="0 0 10 10"><path d="M2 5 L4.2 7.6 L8 2" fill="none" stroke="#000" stroke-width="1.5"/></svg><svg class="abs" style="left:107.0px;top:515.2px" width="14" height="8" viewBox="0 0 14 8"><path d="M1 2 V6.4 M1 4.4 L12.6 3 M12.6 1 V5" stroke="#1a1aee" stroke-width="1" fill="none"/></svg><div class="t" style="left:124.5px;top:513.2px;font-size:9.8px;transform:scaleX(0.8441);transform-origin:0 0;">019</div><div class="ar ard" style="left:33.6px;top:529.0899999999999px"></div><div class="cb" style="left:46.6px;top:525.6px"></div><svg class="abs" style="left:63.099999999999994px;top:524.0899999999999px" width="10" height="12" viewBox="0 0 10 12"><path d="M3 5 V3.4 A2 2 0 0 1 7 3.4 V5" fill="none" stroke="#000" stroke-width="1.3"/><rect x="1.2" y="4.8" width="7.6" height="6" rx="0.6" fill="#000"/><rect x="4.4" y="6.8" width="1.2" height="2" fill="#fff"/></svg><div class="t" style="left:78.6px;top:524.6px;font-size:9.8px;transform:scaleX(0.8441);transform-origin:0 0;">20221219165717...</div><div class="ar ard" style="left:48.900000000000006px;top:540.505px"></div><div class="cb" style="left:61.9px;top:537.0px"></div><svg class="abs" style="left:78.4px;top:535.505px" width="10" height="12" viewBox="0 0 10 12"><path d="M3 5 V3.4 A2 2 0 0 1 7 3.4 V5" fill="none" stroke="#000" stroke-width="1.3"/><rect x="1.2" y="4.8" width="7.6" height="6" rx="0.6" fill="#000"/><rect x="4.4" y="6.8" width="1.2" height="2" fill="#fff"/></svg><div class="t" style="left:93.9px;top:536.0px;font-size:9.8px;transform:scaleX(0.8290);transform-origin:0 0;">TX BB 22-701...</div><div class="ar ard" style="left:64.2px;top:551.92px"></div><div class="cb" style="left:77.2px;top:548.4px"></div><svg class="abs" style="left:93.7px;top:546.92px" width="10" height="12" viewBox="0 0 10 12"><path d="M3 5 V3.4 A2 2 0 0 1 7 3.4 V5" fill="none" stroke="#000" stroke-width="1.3"/><rect x="1.2" y="4.8" width="7.6" height="6" rx="0.6" fill="#000"/><rect x="4.4" y="6.8" width="1.2" height="2" fill="#fff"/></svg><div class="t" style="left:109.2px;top:547.4px;font-size:9.8px;transform:scaleX(0.8062);transform-origin:0 0;">TX BB 22...</div><div class="ar arr" style="left:81.0px;top:561.8349999999999px"></div><div class="cb" style="left:92.5px;top:559.8px"></div><svg class="abs" style="left:109.0px;top:558.3349999999999px" width="10" height="12" viewBox="0 0 10 12"><path d="M3 5 V3.4 A2 2 0 0 1 7 3.4 V5" fill="none" stroke="#000" stroke-width="1.3"/><rect x="1.2" y="4.8" width="7.6" height="6" rx="0.6" fill="#000"/><rect x="4.4" y="6.8" width="1.2" height="2" fill="#fff"/></svg><div class="t" style="left:124.5px;top:558.8px;font-size:9.8px;transform:scaleX(0.8441);transform-origin:0 0;">020</div><div class="ar arr" style="left:81.0px;top:573.25px"></div><div class="cb" style="left:92.5px;top:571.2px"></div><svg class="abs" style="left:109.0px;top:569.75px" width="10" height="12" viewBox="0 0 10 12"><path d="M3 5 V3.4 A2 2 0 0 1 7 3.4 V5" fill="none" stroke="#000" stroke-width="1.3"/><rect x="1.2" y="4.8" width="7.6" height="6" rx="0.6" fill="#000"/><rect x="4.4" y="6.8" width="1.2" height="2" fill="#fff"/></svg><div class="t" style="left:124.5px;top:570.2px;font-size:9.8px;transform:scaleX(0.8441);transform-origin:0 0;">021</div><div class="ar arr" style="left:81.0px;top:584.665px"></div><div class="cb" style="left:92.5px;top:582.7px"></div><svg class="abs" style="left:109.0px;top:581.165px" width="10" height="12" viewBox="0 0 10 12"><path d="M3 5 V3.4 A2 2 0 0 1 7 3.4 V5" fill="none" stroke="#000" stroke-width="1.3"/><rect x="1.2" y="4.8" width="7.6" height="6" rx="0.6" fill="#000"/><rect x="4.4" y="6.8" width="1.2" height="2" fill="#fff"/></svg><div class="t" style="left:124.5px;top:581.7px;font-size:9.8px;transform:scaleX(0.8441);transform-origin:0 0;">022</div><div class="abs" style="left:155px;top:0;width:12px;height:584px;background:linear-gradient(90deg,#e4e4e4,#f3f3f3 35%,#fcfcfc 70%,#fcfcfc);border-left:1px solid #e9e9e9"></div><div class="abs" style="left:156px;top:532px;width:10px;height:41px;background:#e2e2e2"></div><div class="ar" style="left:157.5px;top:3px;border-left:3.2px solid transparent;border-right:3.2px solid transparent;border-bottom:3.4px solid #505050"></div><div class="ar ard" style="left:158.5px;top:577px"></div></div><div class="abs" style="left:177px;top:90.6px;width:281px;height:16.6px;background:#fff;border:1px solid #b4b4b4;border-radius:2px"></div><div class="t" style="left:179.2px;top:93.5px;font-size:9.8px;transform:scaleX(0.8129);transform-origin:0 0;">Ortho_RGBN_Dark_Pixel_Gradient</div><div class="abs" style="left:463px;top:90.6px;width:228px;height:16.6px;background:#fff;border:1px solid #b4b4b4;border-radius:2px"></div><div class="abs" style="left:677px;top:92px;width:13px;height:14px;background:#f2f2f2;border-left:1px solid #dcdcdc"></div><div class="ar ard" style="left:681px;top:98px"></div><div class="abs" style="left:693px;top:91px;width:49px;height:16px;background:linear-gradient(#f8f8f8,#ebebeb);border:1px solid #c4c4c4;border-radius:2px"></div><div class="t" style="left:696.0px;top:93.0px;font-size:9.8px;transform:scaleX(0.9179);transform-origin:0 0;">all</div><div class="ar ard" style="left:730px;top:98px"></div><svg class="abs" style="left:746px;top:90px" width="19" height="19" viewBox="0 0 19 19"><path d="M2.5 9 A6.5 6.5 0 0 1 13.5 4 L15.5 2 L16 9 L9.5 8.5 L11.6 6.2 A3.8 3.8 0 0 0 5.6 9 Z" fill="#35b34a" stroke="#1f8a32" stroke-width="0.5"/><path d="M16.5 10 A6.5 6.5 0 0 1 5.5 15 L3.5 17 L3 10 L9.5 10.5 L7.4 12.8 A3.8 3.8 0 0 0 13.4 10 Z" fill="#d92c2c" stroke="#a31717" stroke-width="0.5"/></svg><div class="abs" style="left:174px;top:118.6px;width:596px;height:573.4px;border:1px solid #bfbfbf;background:#f2efe9"></div><svg class="abs" style="left:175px;top:119.6px" width="594" height="571.4" viewBox="175 119.6 594 571.4"><rect x="175" y="119" width="596" height="572" fill="#f2efe9"/><path d="M281 126h5v4h-5zM267 125h8v5h-8zM262 160h5v8h-5zM264 132h4v4h-4zM266 138h5v8h-5zM265 138h5v5h-5zM258 153h10v10h-10zM262 145h8v6h-8zM258 159h6v8h-6zM259 169h6v6h-6zM265 157h5v6h-5zM277 136h4v6h-4zM277 136h4v5h-4zM267 130h4v8h-4zM270 128h4v5h-4zM269 135h8v6h-8z" fill="#d6ead0" fill-opacity="0.3" stroke="#a9d4a0" stroke-width="0.9"/><path d="M310 127h6v5h-6zM313 129h10v10h-10zM319 129h6v10h-6zM320 126h6v10h-6zM319 131h8v6h-8zM319 130h6v6h-6zM318 126h4v8h-4z" fill="#d6ead0" fill-opacity="0.3" stroke="#a9d4a0" stroke-width="0.9"/><path d="M343 125h6v8h-6zM343 125h6v6h-6zM353 123h8v6h-8zM353 126h8v6h-8zM341 125h10v5h-10zM349 128h8v6h-8zM348 130h8v5h-8z" fill="#d6ead0" fill-opacity="0.3" stroke="#a9d4a0" stroke-width="0.9"/><path d="M373 129h10v8h-10zM372 131h6v4h-6zM372 132h10v5h-10zM390 124h4v8h-4zM375 125h5v4h-5zM369 127h5v10h-5zM369 124h8v10h-8zM380 131h8v4h-8zM381 123h4v10h-4zM373 128h10v10h-10z" fill="#d6ead0" fill-opacity="0.3" stroke="#a9d4a0" stroke-width="0.9"/><path d="M329.0 166.0 L338.0 166.0 L338.0 170.0 L352.0 170.0 L352.0 165.0 L372.0 165.0 L372.0 160.0 L394.0 160.0 L394.0 205.0 L384.0 205.0 L384.0 194.0 L378.0 194.0 L378.0 176.0 L362.0 176.0 L362.0 172.0 L340.0 172.0 L336.0 176.0 L329.0 172.0 Z" fill="#d6ead0" stroke="#a9d4a0" stroke-width="0.9" fill-opacity="0.55"/><path d="M252 197h10v6h-10zM253 199h8v10h-8zM237 215h4v8h-4zM238 217h10v10h-10zM259 202h8v5h-8zM254 217h8v4h-8zM270 201h5v8h-5zM266 204h6v5h-6zM277 212h8v10h-8zM265 216h6v10h-6zM252 208h10v4h-10zM272 217h8v4h-8zM270 209h4v8h-4zM269 228h10v8h-10zM263 222h8v8h-8zM261 219h4v8h-4zM238 212h8v6h-8zM274 214h10v8h-10zM256 192h8v10h-8zM271 227h5v6h-5zM266 211h5v6h-5zM241 224h5v10h-5zM242 214h4v10h-4zM245 218h8v4h-8zM246 219h8v4h-8zM274 208h8v6h-8zM266 197h4v5h-4zM271 216h10v6h-10zM243 216h10v5h-10zM256 196h6v6h-6zM254 208h5v6h-5zM263 194h5v4h-5zM274 215h4v4h-4zM250 212h8v5h-8zM238 220h8v5h-8zM270 210h6v6h-6zM251 195h5v5h-5zM232 212h8v6h-8zM246 211h10v8h-10zM263 193h5v5h-5z" fill="#d6ead0" fill-opacity="0.3" stroke="#a9d4a0" stroke-width="0.9"/><path d="M301 193h8v8h-8zM305 195h6v5h-6z" fill="#d6ead0" fill-opacity="0.3" stroke="#a9d4a0" stroke-width="0.9"/><path d="" fill="#d6ead0" fill-opacity="0.3" stroke="#a9d4a0" stroke-width="0.9"/><path d="M241.0 165.5 L241.0 283.0 L235.5 288.0 L235.5 327.2 L237.6 331.0 L237.6 352.0 L248.2 352.0 L248.2 400.2" fill="none" stroke="#cfcdca" stroke-width="1" stroke-linejoin="round" /><path d="M241.4 274.0 L283.0 274.0" fill="none" stroke="#cfcdca" stroke-width="1" stroke-linejoin="round" /><path d="M175.0 327.0 L235.5 327.0" fill="none" stroke="#cfcdca" stroke-width="1" stroke-linejoin="round" /><path d="M175.0 384.4 L190.4 384.4 L190.4 378.8 L248.2 378.8" fill="none" stroke="#cfcdca" stroke-width="1" stroke-linejoin="round" /><path d="M327.5 144.0 L327.5 185.4 L285.0 185.4" fill="none" stroke="#cfcdca" stroke-width="1" stroke-linejoin="round" /><path d="M327.5 163.6 L394.0 163.6" fill="none" stroke="#cfcdca" stroke-width="1" stroke-linejoin="round" /><path d="M355.7 163.6 L355.7 217.0 L358.0 229.0 L363.0 232.0 L363.0 245.0" fill="none" stroke="#cfcdca" stroke-width="1" stroke-linejoin="round" /><path d="M333.5 227.0 L333.5 295.7" fill="none" stroke="#cfcdca" stroke-width="1" stroke-linejoin="round" /><path d="M332.0 295.7 L352.5 295.7" fill="none" stroke="#cfcdca" stroke-width="1" stroke-linejoin="round" /><path d="M650.0 119.0 L650.0 128.0 L640.6 134.0 L640.6 344.0" fill="none" stroke="#cfcdca" stroke-width="1" stroke-linejoin="round" /><path d="M661.7 147.7 L661.7 207.0" fill="none" stroke="#cfcdca" stroke-width="1" stroke-linejoin="round" /><path d="M661.7 186.0 L693.0 186.0 L693.0 175.5 L730.0 175.5 L730.0 170.0 L732.0 170.0" fill="none" stroke="#cfcdca" stroke-width="1" stroke-linejoin="round" /><path d="M732.0 145.7 L732.0 228.0" fill="none" stroke="#cfcdca" stroke-width="1" stroke-linejoin="round" /><path d="M732.0 196.5 L770.0 196.5" fill="none" stroke="#cfcdca" stroke-width="1" stroke-linejoin="round" /><path d="M687.5 249.7 L770.0 249.7" fill="none" stroke="#cfcdca" stroke-width="1" stroke-linejoin="round" /><path d="M704.0 228.0 L704.0 249.7" fill="none" stroke="#cfcdca" stroke-width="1" stroke-linejoin="round" /><path d="M687.5 249.7 L687.5 276.7" fill="none" stroke="#cfcdca" stroke-width="1" stroke-linejoin="round" /><path d="M593.0 276.7 L691.0 276.7" fill="none" stroke="#cfcdca" stroke-width="1" stroke-linejoin="round" /><path d="M691.0 276.7 L691.0 400.0" fill="none" stroke="#cfcdca" stroke-width="1" stroke-linejoin="round" /><path d="M691.0 281.4 L770.0 281.4" fill="none" stroke="#cfcdca" stroke-width="1" stroke-linejoin="round" /><path d="M640.6 323.0 L712.0 323.0 L718.0 318.0 L770.0 318.0" fill="none" stroke="#cfcdca" stroke-width="1" stroke-linejoin="round" /><path d="M625.6 344.0 L625.6 375.0" fill="none" stroke="#cfcdca" stroke-width="1" stroke-linejoin="round" /><path d="M691.0 340.0 L770.0 340.0" fill="none" stroke="#cfcdca" stroke-width="1" stroke-linejoin="round" /><path d="M722.8 340.0 L722.8 388.0" fill="none" stroke="#cfcdca" stroke-width="1" stroke-linejoin="round" /><path d="M601.0 207.0 L601.0 229.0" fill="none" stroke="#cfcdca" stroke-width="1" stroke-linejoin="round" /><path d="M248.2 400.2 L305.3 400.2" fill="none" stroke="#cfcdca" stroke-width="1" stroke-linejoin="round" /><path d="M258.0 400.2 L258.0 451.0 L264.2 457.0 L264.2 467.4" fill="none" stroke="#cfcdca" stroke-width="1" stroke-linejoin="round" /><path d="M305.3 400.2 L305.3 409.0 L325.8 428.5 L335.5 428.5" fill="none" stroke="#cfcdca" stroke-width="1" stroke-linejoin="round" /><path d="M175.0 564.0 L187.5 566.0 L198.5 577.0 L198.5 680.0 L192.0 691.0" fill="none" stroke="#cfcdca" stroke-width="1" stroke-linejoin="round" /><path d="M198.5 610.0 L265.4 610.0 L265.4 623.0" fill="none" stroke="#cfcdca" stroke-width="1" stroke-linejoin="round" /><path d="M588.0 438.5 L679.0 438.5 L695.5 417.5 L693.0 400.0" fill="none" stroke="#cfcdca" stroke-width="1" stroke-linejoin="round" /><path d="M583.0 649.6 L770.0 649.6" fill="none" stroke="#cfcdca" stroke-width="1" stroke-linejoin="round" /><path d="M712.0 614.0 L712.0 649.6" fill="none" stroke="#cfcdca" stroke-width="1" stroke-linejoin="round" /><path d="M734.0 580.6 L734.0 608.6" fill="none" stroke="#cfcdca" stroke-width="1" stroke-linejoin="round" /><path d="M722.5 590.0 L722.5 619.0" fill="none" stroke="#cfcdca" stroke-width="1" stroke-linejoin="round" /><path d="M700.7 559.8 L768.0 559.8" fill="none" stroke="#cfcdca" stroke-width="1" stroke-linejoin="round" /><path d="M743.3 540.0 L743.3 559.8" fill="none" stroke="#cfcdca" stroke-width="1" stroke-linejoin="round" /><path d="M582.0 645.0 L607.0 645.0" fill="none" stroke="#cfcdca" stroke-width="1" stroke-linejoin="round" /><path d="M754.6 610.0 L754.6 649.6" fill="none" stroke="#cfcdca" stroke-width="1" stroke-linejoin="round" /><path d="M675.2 619.0 L675.2 656.5 L681.9 662.7 L685.0 681.5 L696.5 685.6 L742.0 686.7 L742.0 692.0" fill="none" stroke="#cfcdca" stroke-width="1" stroke-linejoin="round" /><path d="M528.2 669.0 L528.2 691.0" fill="none" stroke="#cfcdca" stroke-width="1" stroke-linejoin="round" /><path d="M583.8 581.7 L597.0 579.5 L610.0 592.6" fill="none" stroke="#cfcdca" stroke-width="1" stroke-linejoin="round" /><path d="M622.0 570.0 L622.0 650.0" fill="none" stroke="#cfcdca" stroke-width="1" stroke-linejoin="round" /><path d="M632.0 570.0 L632.0 650.0" fill="none" stroke="#cfcdca" stroke-width="1" stroke-linejoin="round" /><path d="M645.0 585.0 L645.0 650.0" fill="none" stroke="#cfcdca" stroke-width="1" stroke-linejoin="round" /><path d="M606.0 602.0 L665.0 602.0" fill="none" stroke="#cfcdca" stroke-width="1" stroke-linejoin="round" /><path d="M606.0 628.0 L665.0 628.0" fill="none" stroke="#cfcdca" stroke-width="1" stroke-linejoin="round" /><path d="M612.0 640.0 L660.0 640.0" fill="none" stroke="#cfcdca" stroke-width="1" stroke-linejoin="round" /><path d="M632.0 650.0 L632.0 691.0" fill="none" stroke="#cfcdca" stroke-width="1" stroke-linejoin="round" /><path d="M583.0 640.0 L606.0 640.0" fill="none" stroke="#cfcdca" stroke-width="1" stroke-linejoin="round" /><path d="M695.5 392.0 L715.2 423.3 L725.6 433.7 L717.3 450.3 L717.3 460.7" fill="none" stroke="#cfcdca" stroke-width="1" stroke-linejoin="round" /><path d="M715.2 423.3 L729.8 421.2 L738.0 410.0 L744.3 396.2" fill="none" stroke="#cfcdca" stroke-width="1" stroke-linejoin="round" /><path d="M725.6 433.7 L734.0 433.7 L743.3 446.2 L743.3 454.5" fill="none" stroke="#cfcdca" stroke-width="1" stroke-linejoin="round" /><path d="M674.7 476.3 L675.5 481.0 L677.8 484.7 L694.0 487.4" fill="none" stroke="#cfcdca" stroke-width="1" stroke-linejoin="round" /><rect x="700.7" y="560.7" width="22.5" height="28.5" fill="#d4d2d0"/><rect x="608" y="621" width="11" height="9" fill="#d9d7d5"/><rect x="609" y="597" width="4" height="4" fill="#dcdad8"/><rect x="610" y="683" width="4" height="4" fill="#d9d7d5"/><rect x="624" y="682" width="4" height="4" fill="#d9d7d5"/><path d="M175.0 562.0 L178.0 556.0 L183.0 549.0 L188.0 552.0 L196.0 550.0 L203.0 553.0 L209.0 549.0 L214.0 551.0 L222.0 549.0 L229.0 548.0 L236.0 547.0 L240.0 550.0 L246.0 553.0 L251.0 557.0 L256.0 558.0 L262.0 557.0 L266.0 552.0 L272.0 548.0 L279.0 545.0 L284.0 542.5 L290.0 545.0 L296.0 543.0 L301.0 546.0 L305.0 541.0 L309.0 542.0 L310.0 534.0 L314.0 530.0 L314.5 524.8 L319.0 521.0 L321.0 515.0 L326.0 513.0 L331.0 516.0 L337.0 514.0 L341.0 518.0 L346.0 517.0 L349.0 512.0 L354.0 510.0 L358.0 507.0 L364.0 508.0 L370.0 504.0 L376.0 505.0 L381.0 502.0 L386.0 501.5" fill="none" stroke="#aad3df" stroke-width="1.2" stroke-linejoin="round" /><path d="M584.7 524.5 L590.0 522.5 L593.0 524.0 L596.0 528.0 L601.0 528.5 L606.0 525.0 L611.0 526.0 L614.5 523.0 L620.0 521.5 L624.0 517.5 L630.0 518.5 L636.0 516.5 L641.0 518.0 L647.0 515.5 L652.0 516.5 L656.5 515.0 L657.0 510.0 L654.0 505.5 L658.0 503.0 L657.0 498.5 L660.0 494.0 L661.0 489.0 L665.0 487.0 L666.0 482.0 L670.0 480.0 L672.0 476.0 L675.0 475.0 L677.0 470.0 L681.0 466.0 L684.0 461.0 L687.6 456.0" fill="none" stroke="#aad3df" stroke-width="1.2" stroke-linejoin="round" /><path d="M618.5 683.5 L626.0 679.0 L634.0 671.0 L642.4 664.8 L650.0 665.0 L654.0 670.0 L658.0 673.0 L661.0 668.0 L665.3 665.9 L669.0 669.0 L672.0 673.0" fill="none" stroke="#aad3df" stroke-width="1.2" stroke-linejoin="round" /><path d="M697.5 445.5 C699 441 703 438 708 435 C713 432 718 430 722 430 C720 434 714 436.5 710 439 C706 441.5 701 448 697.5 445.5 Z" fill="#aad3df"/><path d="M724 429.5 L768 424.5" stroke="#aad3df" stroke-width="1.6" stroke-dasharray="5 3" fill="none"/><ellipse cx="735.5" cy="552" rx="3" ry="2" fill="#aad3df"/><ellipse cx="751" cy="557" rx="2" ry="1.2" fill="#aad3df"/><ellipse cx="686" cy="585.8" rx="2.6" ry="1.8" fill="#aad3df"/><ellipse cx="669" cy="579" rx="1.6" ry="1.1" fill="#aad3df"/><circle cx="598.3" cy="629.7" r="0.7" fill="#9fcfe6"/><circle cx="691.7" cy="678.3" r="0.6" fill="#9fcfe6"/><circle cx="591.9" cy="616.4" r="0.5" fill="#9fcfe6"/><circle cx="595.8" cy="633.5" r="0.6" fill="#9fcfe6"/><circle cx="700.4" cy="635.8" r="0.5" fill="#9fcfe6"/><circle cx="690.6" cy="611.6" r="0.6" fill="#9fcfe6"/><circle cx="593.5" cy="671.6" r="0.7" fill="#9fcfe6"/><circle cx="689.5" cy="632.8" r="1.2" fill="#9fcfe6"/><circle cx="701.9" cy="608.4" r="1.0" fill="#9fcfe6"/><circle cx="715.3" cy="633.4" r="1.0" fill="#9fcfe6"/><circle cx="622.7" cy="648.5" r="0.8" fill="#9fcfe6"/><circle cx="727.2" cy="620.5" r="0.8" fill="#9fcfe6"/><circle cx="617.9" cy="661.4" r="0.5" fill="#9fcfe6"/><circle cx="690.1" cy="628.3" r="0.7" fill="#9fcfe6"/><circle cx="718.5" cy="597.4" r="0.5" fill="#9fcfe6"/><circle cx="723.6" cy="579.8" r="0.8" fill="#9fcfe6"/><circle cx="662.2" cy="685.1" r="0.5" fill="#9fcfe6"/><circle cx="724.9" cy="634.5" r="0.7" fill="#9fcfe6"/><circle cx="675.9" cy="663.6" r="0.5" fill="#9fcfe6"/><circle cx="738.7" cy="682.8" r="0.8" fill="#9fcfe6"/><circle cx="712.6" cy="568.4" r="1.2" fill="#9fcfe6"/><circle cx="713.4" cy="644.1" r="1.2" fill="#9fcfe6"/><circle cx="735.4" cy="597.0" r="0.8" fill="#9fcfe6"/><circle cx="747.3" cy="605.1" r="0.8" fill="#9fcfe6"/><circle cx="720.1" cy="611.7" r="0.8" fill="#9fcfe6"/><circle cx="599.7" cy="618.4" r="1.0" fill="#9fcfe6"/><circle cx="685.7" cy="651.8" r="0.7" fill="#9fcfe6"/><circle cx="709.9" cy="609.5" r="0.6" fill="#9fcfe6"/><circle cx="692.8" cy="594.2" r="0.5" fill="#9fcfe6"/><circle cx="696.6" cy="601.4" r="0.6" fill="#9fcfe6"/><circle cx="711.4" cy="627.0" r="1.0" fill="#9fcfe6"/><circle cx="704.9" cy="656.2" r="0.8" fill="#9fcfe6"/><circle cx="749.6" cy="661.4" r="1.2" fill="#9fcfe6"/><circle cx="731.0" cy="611.0" r="0.8" fill="#9fcfe6"/><circle cx="658.3" cy="584.8" r="0.8" fill="#9fcfe6"/><circle cx="603.6" cy="607.3" r="0.5" fill="#9fcfe6"/><circle cx="701.1" cy="684.2" r="1.0" fill="#9fcfe6"/><circle cx="651.6" cy="576.0" r="0.8" fill="#9fcfe6"/><circle cx="672.9" cy="600.5" r="0.6" fill="#9fcfe6"/><circle cx="603.7" cy="604.5" r="0.7" fill="#9fcfe6"/><circle cx="672.6" cy="650.0" r="1.0" fill="#9fcfe6"/><circle cx="589.2" cy="683.6" r="1.0" fill="#9fcfe6"/><circle cx="651.2" cy="649.7" r="0.5" fill="#9fcfe6"/><circle cx="723.7" cy="598.8" r="1.2" fill="#9fcfe6"/><circle cx="743.0" cy="650.5" r="0.7" fill="#9fcfe6"/><circle cx="679.9" cy="678.1" r="0.7" fill="#9fcfe6"/><circle cx="726.3" cy="629.2" r="1.0" fill="#9fcfe6"/><circle cx="645.3" cy="589.0" r="0.6" fill="#9fcfe6"/><circle cx="732.5" cy="666.4" r="1.2" fill="#9fcfe6"/><circle cx="732.0" cy="586.0" r="0.8" fill="#9fcfe6"/><circle cx="711.7" cy="684.3" r="0.8" fill="#9fcfe6"/><circle cx="733.0" cy="654.0" r="0.7" fill="#9fcfe6"/><circle cx="759.8" cy="607.4" r="0.6" fill="#9fcfe6"/><circle cx="603.7" cy="621.1" r="0.7" fill="#9fcfe6"/><circle cx="749.8" cy="669.3" r="0.8" fill="#9fcfe6"/><circle cx="751.4" cy="604.7" r="1.2" fill="#9fcfe6"/><circle cx="600.5" cy="645.9" r="0.8" fill="#9fcfe6"/><circle cx="728.2" cy="657.5" r="0.8" fill="#9fcfe6"/><circle cx="747.7" cy="616.4" r="1.2" fill="#9fcfe6"/><circle cx="645.9" cy="664.1" r="1.2" fill="#9fcfe6"/><circle cx="758.3" cy="654.2" r="0.6" fill="#9fcfe6"/><circle cx="766.7" cy="563.6" r="1.0" fill="#9fcfe6"/><circle cx="750.6" cy="664.8" r="0.6" fill="#9fcfe6"/><circle cx="696.9" cy="637.5" r="0.8" fill="#9fcfe6"/><circle cx="705.3" cy="605.6" r="1.0" fill="#9fcfe6"/><circle cx="685.3" cy="562.8" r="1.2" fill="#9fcfe6"/><circle cx="703.9" cy="628.5" r="0.6" fill="#9fcfe6"/><circle cx="664.4" cy="673.3" r="0.6" fill="#9fcfe6"/><circle cx="724.8" cy="602.4" r="1.0" fill="#9fcfe6"/><circle cx="661.7" cy="577.0" r="0.7" fill="#9fcfe6"/><circle cx="749.3" cy="646.1" r="1.0" fill="#9fcfe6"/><circle cx="662.0" cy="679.3" r="1.0" fill="#9fcfe6"/><circle cx="744.7" cy="660.9" r="1.0" fill="#9fcfe6"/><circle cx="585.7" cy="663.9" r="0.6" fill="#9fcfe6"/><circle cx="682.1" cy="622.7" r="0.5" fill="#9fcfe6"/><circle cx="746.6" cy="567.4" r="0.6" fill="#9fcfe6"/><circle cx="635.7" cy="660.4" r="1.0" fill="#9fcfe6"/><circle cx="667.7" cy="563.6" r="0.5" fill="#9fcfe6"/><circle cx="666.1" cy="639.6" r="1.0" fill="#9fcfe6"/><circle cx="695.9" cy="585.9" r="0.7" fill="#9fcfe6"/><circle cx="667.8" cy="629.3" r="0.8" fill="#9fcfe6"/><circle cx="745.3" cy="680.6" r="1.0" fill="#9fcfe6"/><circle cx="748.4" cy="586.3" r="0.8" fill="#9fcfe6"/><circle cx="707.5" cy="661.9" r="0.6" fill="#9fcfe6"/><circle cx="756.9" cy="643.6" r="0.7" fill="#9fcfe6"/><circle cx="611.2" cy="674.8" r="0.8" fill="#9fcfe6"/><circle cx="625.2" cy="683.8" r="0.8" fill="#9fcfe6"/><circle cx="746.9" cy="581.2" r="1.2" fill="#9fcfe6"/><circle cx="737.3" cy="581.0" r="0.8" fill="#9fcfe6"/><circle cx="766.9" cy="612.5" r="0.8" fill="#9fcfe6"/><circle cx="717.2" cy="562.5" r="1.0" fill="#9fcfe6"/><circle cx="668.9" cy="651.4" r="0.8" fill="#9fcfe6"/><circle cx="678.7" cy="568.4" r="0.6" fill="#9fcfe6"/><circle cx="762.8" cy="573.6" r="0.7" fill="#9fcfe6"/><circle cx="634.8" cy="677.8" r="0.6" fill="#9fcfe6"/><circle cx="751.8" cy="666.5" r="0.7" fill="#9fcfe6"/><circle cx="679.2" cy="624.3" r="0.7" fill="#9fcfe6"/><circle cx="662.8" cy="569.4" r="1.2" fill="#9fcfe6"/><circle cx="607.3" cy="561.5" r="0.8" fill="#9fcfe6"/><circle cx="754.6" cy="594.8" r="0.6" fill="#9fcfe6"/><circle cx="592.9" cy="652.2" r="0.5" fill="#9fcfe6"/><circle cx="762.4" cy="594.0" r="0.6" fill="#9fcfe6"/><circle cx="640.8" cy="658.7" r="0.7" fill="#9fcfe6"/><circle cx="666.6" cy="647.4" r="0.7" fill="#9fcfe6"/><circle cx="587.8" cy="655.3" r="1.0" fill="#9fcfe6"/><circle cx="764.0" cy="626.9" r="0.6" fill="#9fcfe6"/><circle cx="756.0" cy="573.8" r="1.2" fill="#9fcfe6"/><circle cx="737.7" cy="611.1" r="1.0" fill="#9fcfe6"/><circle cx="621.3" cy="674.7" r="1.2" fill="#9fcfe6"/><circle cx="701.4" cy="612.6" r="0.7" fill="#9fcfe6"/><circle cx="764.7" cy="668.8" r="0.5" fill="#9fcfe6"/><circle cx="597.9" cy="656.3" r="0.7" fill="#9fcfe6"/><circle cx="762.7" cy="637.8" r="1.2" fill="#9fcfe6"/><circle cx="633.2" cy="685.0" r="1.0" fill="#9fcfe6"/><circle cx="644.2" cy="564.5" r="0.6" fill="#9fcfe6"/><circle cx="671.9" cy="625.4" r="0.6" fill="#9fcfe6"/><circle cx="630.4" cy="660.9" r="0.5" fill="#9fcfe6"/><circle cx="681.8" cy="657.6" r="1.2" fill="#9fcfe6"/><circle cx="748.4" cy="661.9" r="1.0" fill="#9fcfe6"/><circle cx="765.2" cy="579.4" r="1.2" fill="#9fcfe6"/><circle cx="698.2" cy="578.8" r="1.2" fill="#9fcfe6"/><circle cx="748.2" cy="641.6" r="1.2" fill="#9fcfe6"/><circle cx="713.3" cy="625.7" r="1.0" fill="#9fcfe6"/><circle cx="722.8" cy="633.9" r="0.5" fill="#9fcfe6"/><circle cx="736.2" cy="635.9" r="1.2" fill="#9fcfe6"/><circle cx="710.0" cy="650.1" r="0.6" fill="#9fcfe6"/><circle cx="760.6" cy="609.0" r="0.8" fill="#9fcfe6"/><circle cx="687.2" cy="641.6" r="1.2" fill="#9fcfe6"/><circle cx="668.6" cy="569.1" r="1.0" fill="#9fcfe6"/><circle cx="601.8" cy="628.4" r="1.2" fill="#9fcfe6"/><circle cx="719.8" cy="592.8" r="0.5" fill="#9fcfe6"/><circle cx="739.8" cy="590.5" r="0.6" fill="#9fcfe6"/><circle cx="669.2" cy="669.9" r="0.5" fill="#9fcfe6"/><circle cx="672.7" cy="648.9" r="0.5" fill="#9fcfe6"/><circle cx="697.9" cy="643.6" r="0.5" fill="#9fcfe6"/><circle cx="694.7" cy="603.1" r="1.2" fill="#9fcfe6"/><circle cx="721.0" cy="599.6" r="1.0" fill="#9fcfe6"/><circle cx="673.9" cy="686.4" r="0.5" fill="#9fcfe6"/><circle cx="711.7" cy="647.8" r="0.7" fill="#9fcfe6"/><circle cx="714.7" cy="597.1" r="0.8" fill="#9fcfe6"/><circle cx="670.3" cy="575.4" r="0.6" fill="#9fcfe6"/><circle cx="767.0" cy="689.2" r="0.8" fill="#9fcfe6"/><circle cx="623.4" cy="682.9" r="0.6" fill="#9fcfe6"/><circle cx="598.7" cy="571.7" r="0.7" fill="#9fcfe6"/><circle cx="759.4" cy="577.2" r="1.2" fill="#9fcfe6"/><circle cx="678.1" cy="675.3" r="1.2" fill="#9fcfe6"/><circle cx="745.3" cy="611.2" r="0.6" fill="#9fcfe6"/><circle cx="585.7" cy="623.9" r="0.8" fill="#9fcfe6"/><circle cx="659.2" cy="654.5" r="0.8" fill="#9fcfe6"/><circle cx="738.8" cy="560.2" r="0.7" fill="#9fcfe6"/><circle cx="738.6" cy="575.6" r="0.6" fill="#9fcfe6"/><circle cx="715.5" cy="677.2" r="0.7" fill="#9fcfe6"/><circle cx="744.2" cy="569.9" r="0.8" fill="#9fcfe6"/><circle cx="723.3" cy="671.1" r="0.7" fill="#9fcfe6"/><circle cx="603.6" cy="668.5" r="0.7" fill="#9fcfe6"/><circle cx="701.2" cy="579.4" r="0.7" fill="#9fcfe6"/><circle cx="726.5" cy="662.1" r="0.8" fill="#9fcfe6"/><circle cx="746.8" cy="665.6" r="1.2" fill="#9fcfe6"/><circle cx="658.2" cy="673.8" r="1.0" fill="#9fcfe6"/><circle cx="685.5" cy="653.5" r="0.5" fill="#9fcfe6"/><circle cx="755.8" cy="613.4" r="1.0" fill="#9fcfe6"/><circle cx="722.7" cy="643.8" r="0.7" fill="#9fcfe6"/><circle cx="673.9" cy="678.5" r="1.0" fill="#9fcfe6"/><circle cx="720.2" cy="686.9" r="0.7" fill="#9fcfe6"/><circle cx="673.4" cy="647.0" r="0.5" fill="#9fcfe6"/><circle cx="750.8" cy="624.6" r="0.6" fill="#9fcfe6"/><circle cx="667.9" cy="603.3" r="0.8" fill="#9fcfe6"/><circle cx="733.1" cy="586.3" r="0.5" fill="#9fcfe6"/><circle cx="722.2" cy="613.7" r="0.8" fill="#9fcfe6"/><circle cx="721.5" cy="587.3" r="0.7" fill="#9fcfe6"/><circle cx="762.1" cy="576.4" r="1.0" fill="#9fcfe6"/><circle cx="681.8" cy="662.7" r="0.6" fill="#9fcfe6"/><circle cx="601.9" cy="676.6" r="0.8" fill="#9fcfe6"/><circle cx="549.9" cy="687.3" r="0.7" fill="#aad3df"/><circle cx="532.0" cy="672.4" r="0.7" fill="#aad3df"/><circle cx="347.1" cy="684.8" r="0.7" fill="#aad3df"/><circle cx="537.1" cy="680.5" r="0.7" fill="#aad3df"/><circle cx="469.2" cy="672.0" r="0.7" fill="#aad3df"/><circle cx="426.1" cy="688.7" r="0.7" fill="#aad3df"/><circle cx="521.6" cy="687.4" r="0.7" fill="#aad3df"/><circle cx="553.9" cy="676.5" r="0.7" fill="#aad3df"/><circle cx="364.0" cy="674.8" r="0.7" fill="#aad3df"/><circle cx="454.9" cy="684.3" r="0.7" fill="#aad3df"/><circle cx="547.1" cy="685.0" r="0.7" fill="#aad3df"/><circle cx="482.4" cy="685.8" r="0.7" fill="#aad3df"/><circle cx="440.6" cy="681.9" r="0.7" fill="#aad3df"/><circle cx="348.7" cy="686.1" r="0.7" fill="#aad3df"/><circle cx="372" cy="603" r="0.7" fill="#aad3df"/><circle cx="375" cy="646" r="0.7" fill="#aad3df"/><circle cx="376" cy="624" r="0.7" fill="#aad3df"/><circle cx="382" cy="612" r="0.7" fill="#aad3df"/><circle cx="443" cy="680" r="0.7" fill="#aad3df"/><circle cx="450" cy="690" r="0.7" fill="#aad3df"/><path d="M360.0 119.0 L345.0 123.0 L322.0 129.0 L300.0 135.0 L289.0 140.0 L278.0 150.0 L267.0 157.0 L250.0 159.5 L239.4 159.6" fill="none" stroke="#f7d5a2" stroke-width="1.3" stroke-linejoin="round" /><path d="M239.4 159.6 L229.5 168.7 L213.0 179.0 L198.0 188.5 L175.0 188.5" fill="none" stroke="#f7d5a2" stroke-width="1.3" stroke-linejoin="round" /><path d="M283.0 274.7 L352.5 276.0" fill="none" stroke="#f7d5a2" stroke-width="1.3" stroke-linejoin="round" /><path d="M740.0 119.0 L739.5 140.0 L741.8 157.6 L752.0 166.0 L761.7 175.5 L763.7 200.0 L763.7 229.0 L757.0 240.0 L751.7 249.0 L751.7 296.5 L745.8 304.4 L746.0 325.0 L747.8 344.0 L753.7 358.0 L752.0 380.0 L751.7 400.0" fill="none" stroke="#f7d5a2" stroke-width="1.3" stroke-linejoin="round" /><path d="M770.0 343.0 L762.0 352.0 L753.7 358.0" fill="none" stroke="#f7d5a2" stroke-width="1.3" stroke-linejoin="round" /><path d="M597.0 207.0 L686.0 207.0 L695.0 213.0 L700.0 224.0 L704.0 228.0 L763.7 228.0 L770.0 232.0" fill="none" stroke="#f7d5a2" stroke-width="1.3" stroke-linejoin="round" /><path d="M611.0 375.0 L640.0 375.0 L648.6 374.0 L657.0 377.0 L666.4 380.6 L690.0 381.5 L708.0 382.0 L716.0 385.0 L724.0 387.8 L738.0 391.0 L751.7 393.7 L762.0 397.0 L770.0 398.0" fill="none" stroke="#f7d5a2" stroke-width="1.3" stroke-linejoin="round" /><path d="M752.7 390.0 L757.0 402.0 L760.0 413.0 L761.0 431.6 L766.0 440.0 L761.0 452.4 L745.0 457.5 L725.6 462.8 L716.0 459.0 L708.0 455.0 L699.6 462.8 L697.5 477.4 L694.0 489.9 L695.0 520.0 L695.5 542.0 L695.5 562.0 L690.0 570.0 L675.8 583.9 L662.6 601.4 L652.0 605.0" fill="none" stroke="#f7d5a2" stroke-width="1.3" stroke-linejoin="round" /><path d="M761.0 452.4 L764.0 470.0 L764.0 489.9 L763.0 506.5 L768.3 519.0" fill="none" stroke="#f7d5a2" stroke-width="1.3" stroke-linejoin="round" /><path d="M751.7 393.7 L752.7 390.0" fill="none" stroke="#f7d5a2" stroke-width="1.3" stroke-linejoin="round" /><path d="M349.5 691.0 L349.5 675.8 L395.5 675.0 L395.5 669.0" fill="none" stroke="#f7d5a2" stroke-width="1.3" stroke-linejoin="round" /><path d="M470.8 669.0 L470.8 691.0" fill="none" stroke="#f7d5a2" stroke-width="1.3" stroke-linejoin="round" /><path d="M588.0 438.5 L600.0 438.5" fill="none" stroke="#f7d5a2" stroke-width="1.3" stroke-linejoin="round" /><path d="M294.0 119.0 L294.0 145.0" fill="none" stroke="#d69cd9" stroke-width="1.1" stroke-linejoin="round" stroke-dasharray="3.4 2.8"/><path d="M283.0 145.0 L395.0 145.0" fill="none" stroke="#d69cd9" stroke-width="1.1" stroke-linejoin="round" stroke-dasharray="3.4 2.8"/><path d="M598.0 145.0 L770.0 145.0" fill="none" stroke="#d69cd9" stroke-width="1.1" stroke-linejoin="round" stroke-dasharray="3.4 2.8"/><path d="M283.0 145.0 L283.0 691.0" fill="none" stroke="#d69cd9" stroke-width="1.1" stroke-linejoin="round" stroke-dasharray="3.4 2.8"/><path d="M175.0 143.7 L195.0 148.0 L215.0 151.0 L232.0 155.0 L239.4 159.6 L246.0 170.0 L262.0 178.0 L285.0 187.0 L296.0 196.0 L368.0 251.0" fill="none" stroke="#c9978a" stroke-width="1.3" stroke-linejoin="round" /><path d="M686.0 119.0 L597.0 183.4" fill="none" stroke="#c9978a" stroke-width="1.3" stroke-linejoin="round" /><path d="M175.0 553.0 L252.0 480.0 L322.0 418.0 L335.0 406.0 L350.4 389.5" fill="none" stroke="#c9978a" stroke-width="1.3" stroke-linejoin="round" /><path d="M654.0 609.0 L700.0 592.0 L770.0 566.0" fill="none" stroke="#b5968e" stroke-width="1.3" stroke-linejoin="round" /><path d="M662.6 614.5 L700.0 620.0 L715.0 623.0 L770.0 643.0" fill="none" stroke="#c7a79c" stroke-width="1.3" stroke-linejoin="round" /><path d="M591.0 317.5 L650.6 317.5" fill="none" stroke="#a9a7a5" stroke-width="1.2" stroke-linejoin="round" /><path d="M622.8 317.5 L622.8 344.0 L612.0 348.0 L597.0 352.0" fill="none" stroke="#a9a7a5" stroke-width="1.2" stroke-linejoin="round" /><path d="M588.3 448.0 L594.5 460.7 L606.0 471.0 L612.2 492.0 L608.0 498.0 L621.6 519.0 L624.7 533.5 L634.0 540.8 L643.0 553.0 L645.0 575.0 L645.5 592.6" fill="none" stroke="#a9a7a5" stroke-width="1.2" stroke-linejoin="round" /><path d="M770.0 448.0 L763.4 465.7 L750.0 480.0 L741.5 492.0 L735.0 508.0 L732.7 518.2 L740.0 535.0 L750.0 548.9 L770.0 568.6" fill="none" stroke="#a9a7a5" stroke-width="1.2" stroke-linejoin="round" /><path d="M638.6 619.0 L630.0 645.0 L616.7 680.0 L614.0 691.0" fill="none" stroke="#a9a7a5" stroke-width="1.2" stroke-linejoin="round" /><path d="M591.0 332.0 L593.0 352.0 L594.5 372.0 L596.6 390.0 L599.0 400.0" fill="none" stroke="#f0917d" stroke-width="1.6" stroke-linejoin="round" /><path d="M599.0 400.0 L601.8 408.7 L599.0 417.0 L599.0 444.0 L600.8 450.0 L600.8 473.0 L611.2 494.0 L624.7 519.0 L636.0 542.0 L637.5 556.0 L638.0 571.0 L638.3 592.6 L638.3 612.0" fill="none" stroke="#f0917d" stroke-width="1.6" stroke-linejoin="round" /><rect x="606.6" y="591.8" width="58.2" height="52.5" rx="7" fill="none" stroke="#f2b9a0" stroke-width="1.3"/><path d="M692.0 596.0 L700.0 601.0 L708.6 606.7" fill="none" stroke="#f2a68c" stroke-width="1.3" stroke-linejoin="round" /><path d="M175.0 640.0 L192.0 647.4 L211.6 646.5 L240.0 635.0 L270.7 622.4 L284.0 621.5 L297.0 620.0 L322.0 610.0 L349.5 599.0 L362.0 594.0 L375.8 589.6 L385.0 589.6" fill="none" stroke="#e9799c" stroke-width="1.6" stroke-linejoin="round" /><path d="M583.0 619.0 L606.0 619.5 L640.0 618.8 L660.0 618.5 L677.8 618.0 L684.0 613.2 L699.6 612.4 L705.9 608.0 L740.0 607.8 L765.0 607.6 L769.0 609.0" fill="none" stroke="#e9799c" stroke-width="1.5" stroke-linejoin="round" /><path d="M636.2 619.0 L628.0 625.0 L621.6 631.5 L614.3 644.0 L612.5 655.0 L612.2 664.8 L613.3 685.6 L621.6 692.0" fill="none" stroke="#e9799c" stroke-width="1.5" stroke-linejoin="round" /><path d="M606.6 644.0 L625.0 643.5 L640.0 640.0" fill="none" stroke="#e9799c" stroke-width="1.2" stroke-linejoin="round" /><text x="226.7" y="166.5" font-family="Liberation Sans" font-size="9" fill="#444" stroke="#f2efe9" stroke-width="2" paint-order="stroke"  textLength="28.5" lengthAdjust="spacingAndGlyphs">Clayton</text><text x="275" y="192.3" font-family="Liberation Sans" font-size="8.6" fill="#444" stroke="#f2efe9" stroke-width="2" paint-order="stroke"  textLength="26" lengthAdjust="spacingAndGlyphs">Texline</text><text x="634.7" y="146.8" font-family="Liberation Sans" font-size="9" fill="#444" stroke="#f2efe9" stroke-width="2" paint-order="stroke"  textLength="33.5" lengthAdjust="spacingAndGlyphs">Texhoma</text><text x="584" y="379.6" font-family="Liberation Sans" font-size="9" fill="#444" stroke="#f2efe9" stroke-width="2" paint-order="stroke"  textLength="28" lengthAdjust="spacingAndGlyphs">Dumas</text><text x="752.4" y="449.8" font-family="Liberation Sans" font-size="9" fill="#444" stroke="#f2efe9" stroke-width="2" paint-order="stroke"  textLength="27" lengthAdjust="spacingAndGlyphs">Borger</text><text x="618.9" y="616.5" font-family="Liberation Sans" font-size="9.6" fill="#444" stroke="#f2efe9" stroke-width="2" paint-order="stroke"  textLength="37" lengthAdjust="spacingAndGlyphs">Amarillo</text><text x="340.0" y="176.5" font-family="Liberation Sans" font-style="italic" font-size="8.2" fill="#5c9156" textLength="40" lengthAdjust="spacingAndGlyphs">Rita Blanca</text><text x="345.5" y="186.7" font-family="Liberation Sans" font-style="italic" font-size="8.2" fill="#5c9156" textLength="29" lengthAdjust="spacingAndGlyphs">National</text><text x="342.5" y="196.9" font-family="Liberation Sans" font-style="italic" font-size="8.2" fill="#5c9156" textLength="35" lengthAdjust="spacingAndGlyphs">Grassland</text><defs><clipPath id="imgclip"><path d="M395.5 119.0 L598.0 119.0 L597.0 153.0 L594.5 225.0 L592.5 320.0 L590.0 400.0 L586.5 500.0 L584.0 600.0 L581.3 691.0 L562.0 691.0 L562.0 668.0 L384.0 668.0 L385.5 580.0 L386.6 481.0 L368.2 481.0 L368.2 507.3 L353.0 507.3 L353.0 511.5 L334.0 511.5 L335.7 396.2 L351.5 396.2 L352.4 320.0 L353.5 261.6 L368.8 261.6 L368.8 243.5 L383.0 243.5 L383.0 233.5 L393.8 233.5 Z"/></clipPath><linearGradient id="ibase" x1="0" y1="119" x2="0" y2="691" gradientUnits="userSpaceOnUse"><stop offset="0" stop-color="#6f6256"/><stop offset="0.1" stop-color="#74685d"/><stop offset="0.2" stop-color="#716559"/><stop offset="0.3" stop-color="#746550"/><stop offset="0.42" stop-color="#72634d"/><stop offset="0.5" stop-color="#786b5f"/><stop offset="0.62" stop-color="#796c60"/><stop offset="0.75" stop-color="#75685b"/><stop offset="0.84" stop-color="#6d5f4d"/><stop offset="1" stop-color="#665847"/></linearGradient><radialGradient id="gl1" cx="0.5" cy="0.5" r="0.5"><stop offset="0" stop-color="#8c8276" stop-opacity="0.7"/><stop offset="1" stop-color="#8c8276" stop-opacity="0"/></radialGradient><radialGradient id="gd1" cx="0.5" cy="0.5" r="0.5"><stop offset="0" stop-color="#4c4236" stop-opacity="0.55"/><stop offset="1" stop-color="#4c4236" stop-opacity="0"/></radialGradient><radialGradient id="gt1" cx="0.5" cy="0.5" r="0.5"><stop offset="0" stop-color="#8f7a58" stop-opacity="0.5"/><stop offset="1" stop-color="#8f7a58" stop-opacity="0"/></radialGradient><filter id="blk" x="0" y="0" width="100%" height="100%" color-interpolation-filters="sRGB">
<feTurbulence type="fractalNoise" baseFrequency="0.16" numOctaves="2" seed="5"/>
<feColorMatrix type="matrix" values="1.5 0 0 0 -0.30  1.3 0 0 0 -0.255  1.05 0 0 0 -0.195  0 0 0 0 1" result="src"/>
<feFlood x="1" y="1" width="1" height="1" flood-color="#000"/>
<feComposite width="3" height="3"/>
<feTile result="grid"/>
<feComposite in="src" in2="grid" operator="in"/>
<feMorphology operator="dilate" radius="1"/>
</filter><filter id="blk2" x="0" y="0" width="100%" height="100%" color-interpolation-filters="sRGB">
<feTurbulence type="fractalNoise" baseFrequency="0.1" numOctaves="2" seed="21"/>
<feColorMatrix type="matrix" values="1.5 0 0 0 -0.31  1.3 0 0 0 -0.27  1.05 0 0 0 -0.205  0 0 0 0 1" result="src"/>
<feFlood x="2" y="2" width="1" height="1" flood-color="#000"/>
<feComposite width="5" height="5"/>
<feTile result="grid"/>
<feComposite in="src" in2="grid" operator="in"/>
<feMorphology operator="dilate" radius="2"/>
</filter><filter id="fine" x="0" y="0" width="100%" height="100%" color-interpolation-filters="sRGB">
<feTurbulence type="fractalNoise" baseFrequency="0.12 0.15" numOctaves="4" seed="9"/>
<feColorMatrix type="matrix" values="1.4 0 0 0 -0.25  1.25 0 0 0 -0.225  1.05 0 0 0 -0.175  0 0 0 0 1"/>
<feGaussianBlur stdDeviation="0.8"/>
</filter><filter id="mblur" x="-10%" y="-10%" width="120%" height="120%"><feGaussianBlur stdDeviation="11"/></filter>
<mask id="agmask" maskUnits="userSpaceOnUse" x="320" y="100" width="300" height="610"><rect x="320" y="100" width="300" height="610" fill="#000"/><g filter="url(#mblur)" fill="#fff"><rect x="320" y="100" width="300" height="58"/><rect x="520" y="150" width="100" height="100"/><rect x="320" y="245" width="300" height="145"/><path d="M480 385 H620 V465 H540 Z"/><rect x="370" y="606" width="250" height="110"/><ellipse cx="465" cy="198" rx="50" ry="34" fill="#000"/></g></mask></defs><g clip-path="url(#imgclip)"><rect x="330" y="119" width="270" height="572" fill="url(#ibase)"/><rect x="330" y="119" width="270" height="572" filter="url(#fine)" opacity="0.2"/><g mask="url(#agmask)"><g transform="translate(330,119)"><rect x="0" y="0" width="270" height="572" filter="url(#blk2)" opacity="0.25"/></g><g transform="translate(330,119)"><rect x="0" y="0" width="270" height="572" filter="url(#blk)" opacity="0.18"/></g></g><ellipse cx="470" cy="195" rx="70" ry="52" fill="url(#gl1)" opacity="0.7"/><ellipse cx="412" cy="222" rx="26" ry="26" fill="url(#gd1)"/><ellipse cx="440" cy="300" rx="90" ry="40" fill="url(#gt1)" opacity="0.6"/><ellipse cx="530" cy="365" rx="60" ry="40" fill="url(#gt1)" opacity="0.5"/><ellipse cx="450" cy="430" rx="35" ry="60" fill="url(#gl1)" opacity="0.5"/><ellipse cx="500" cy="560" rx="60" ry="35" fill="url(#gd1)" opacity="0.45"/><ellipse cx="470" cy="640" rx="90" ry="28" fill="url(#gt1)" opacity="0.4"/><g mask="url(#agmask)"><g opacity="0.55"><path d="M525 121h3v2h-3zM515 121h2v2h-2zM513 148h2v4h-2zM489 131h4v4h-4zM495 124h3v3h-3zM591 157h4v4h-4zM484 141h2v2h-2zM409 121h4v2h-4zM579 154h2v4h-2zM408 149h2v2h-2zM406 160h2v2h-2zM532 129h2v4h-2zM585 128h4v3h-4zM521 143h2v2h-2zM498 125h3v2h-3zM451 144h4v3h-4zM404 135h2v3h-2zM555 124h2v3h-2zM436 157h3v3h-3zM518 140h3v4h-3zM447 148h2v4h-2zM561 150h4v3h-4zM519 151h3v3h-3zM529 120h2v3h-2zM426 135h2v4h-2zM586 132h3v3h-3zM491 150h2v3h-2zM444 139h2v4h-2zM584 143h3v3h-3zM508 141h2v2h-2zM467 138h3v3h-3zM509 137h4v4h-4zM574 229h4v4h-4zM554 212h2v2h-2zM575 191h3v3h-3zM563 201h3v3h-3zM568 178h4v3h-4zM534 206h3v4h-3zM536 189h3v2h-3zM566 222h3v2h-3zM557 206h4v3h-4zM581 178h2v4h-2zM525 217h2v4h-2zM586 188h3v4h-3zM528 247h3v4h-3zM589 338h4v3h-4zM542 320h3v2h-3zM573 264h3v2h-3zM414 243h2v3h-2zM481 304h4v3h-4zM404 338h4v3h-4zM476 259h2v2h-2zM478 289h2v3h-2zM538 322h2v3h-2zM364 391h4v3h-4zM498 282h4v4h-4zM425 391h3v3h-3zM577 345h4v3h-4zM385 339h4v2h-4zM364 385h2v4h-2zM511 381h3v3h-3zM532 367h4v4h-4zM520 342h3v3h-3zM453 328h3v4h-3zM528 303h2v4h-2zM502 390h2v2h-2zM577 376h2v4h-2zM575 299h3v2h-3zM424 271h2v3h-2zM586 313h2v4h-2zM489 245h3v2h-3zM582 355h3v4h-3zM551 303h2v4h-2zM559 344h4v2h-4zM397 345h3v2h-3zM462 309h2v4h-2zM547 326h3v3h-3zM485 398h2v4h-2zM562 254h2v2h-2zM542 350h4v3h-4zM428 310h2v2h-2zM408 321h2v2h-2zM595 364h4v4h-4zM404 377h2v2h-2zM548 262h2v2h-2zM461 264h4v4h-4zM549 315h3v4h-3zM482 367h4v2h-4zM395 246h2v2h-2zM357 316h3v4h-3zM581 263h4v2h-4zM461 282h3v3h-3zM373 295h4v3h-4zM381 361h2v2h-2zM413 313h3v4h-3zM422 302h2v4h-2zM574 344h4v2h-4zM583 384h4v2h-4zM481 306h2v2h-2zM400 272h3v4h-3zM473 273h3v3h-3zM475 302h4v4h-4zM536 327h4v2h-4zM515 311h4v4h-4zM365 367h4v2h-4zM586 267h3v2h-3zM532 317h3v2h-3zM538 277h3v3h-3zM440 355h2v4h-2zM566 356h3v2h-3zM462 399h3v2h-3zM408 302h2v2h-2zM532 377h4v2h-4zM461 352h2v2h-2zM400 365h4v4h-4zM521 395h4v3h-4zM368 341h2v4h-2zM397 359h2v3h-2zM409 279h3v2h-3zM464 350h2v4h-2zM354 309h3v4h-3zM554 275h2v3h-2zM421 359h3v3h-3zM503 284h4v3h-4zM590 354h3v3h-3zM479 281h4v3h-4zM531 381h4v3h-4zM430 250h4v3h-4zM481 357h3v2h-3zM464 265h3v3h-3zM379 306h3v3h-3zM427 435h2v3h-2zM390 426h2v3h-2zM436 409h3v2h-3zM347 404h3v2h-3zM378 439h3v3h-3zM486 652h4v2h-4zM389 639h4v2h-4zM417 628h2v3h-2zM451 640h2v2h-2zM494 642h3v2h-3zM517 619h2v3h-2zM477 643h2v4h-2zM405 598h3v3h-3zM514 604h2v3h-2zM482 659h3v4h-3zM414 605h4v4h-4zM572 658h4v2h-4zM484 652h2v2h-2zM486 626h4v4h-4zM542 628h2v2h-2zM529 636h3v3h-3zM555 597h4v3h-4zM532 609h3v3h-3zM470 611h4v4h-4zM421 634h2v4h-2zM532 649h4v2h-4zM469 648h2v3h-2zM457 615h4v4h-4zM414 636h2v2h-2zM469 628h4v4h-4zM444 640h2v4h-2zM540 622h2v2h-2zM535 651h4v2h-4zM574 617h2v4h-2zM422 618h3v3h-3zM454 618h3v2h-3zM512 666h2v4h-2zM443 594h4v3h-4zM439 612h2v3h-2zM466 599h2v2h-2zM553 642h2v4h-2zM404 654h2v3h-2zM438 644h3v3h-3zM403 619h3v3h-3zM390 592h4v4h-4zM534 620h3v2h-3zM489 433h3v3h-3zM541 465h3v2h-3zM484 404h3v2h-3zM497 425h2v2h-2zM569 685h2v3h-2z" fill="#857255"/><path d="M424 124h4v4h-4zM465 126h3v2h-3zM468 147h4v4h-4zM440 160h4v3h-4zM397 148h2v2h-2zM445 139h3v2h-3zM570 122h4v4h-4zM489 155h2v3h-2zM407 140h2v2h-2zM533 154h3v2h-3zM556 158h4v2h-4zM453 147h4v3h-4zM579 144h4v2h-4zM550 135h3v3h-3zM490 130h3v2h-3zM411 148h4v2h-4zM537 132h4v4h-4zM560 158h2v2h-2zM458 145h4v4h-4zM587 128h2v3h-2zM538 213h4v3h-4zM594 198h3v3h-3zM527 234h2v3h-2zM595 169h4v3h-4zM576 191h4v2h-4zM578 193h2v4h-2zM578 185h2v3h-2zM553 216h2v3h-2zM537 193h2v3h-2zM551 174h2v3h-2zM553 168h4v3h-4zM546 194h3v4h-3zM574 196h2v2h-2zM525 232h4v3h-4zM544 184h4v4h-4zM589 172h4v2h-4zM587 163h2v3h-2zM406 171h2v2h-2zM416 202h4v3h-4zM399 225h2v4h-2zM432 223h4v2h-4zM421 189h3v4h-3zM402 213h2v3h-2zM413 219h2v4h-2zM433 168h4v4h-4zM537 315h4v2h-4zM455 364h2v3h-2zM364 307h4v3h-4zM398 347h4v3h-4zM473 320h4v3h-4zM466 397h2v4h-2zM539 261h4v2h-4zM466 283h2v2h-2zM388 349h2v4h-2zM580 367h3v3h-3zM365 306h4v3h-4zM416 298h2v2h-2zM461 353h2v4h-2zM389 292h4v3h-4zM493 247h3v4h-3zM385 279h2v3h-2zM538 306h4v2h-4zM550 348h2v2h-2zM495 360h4v3h-4zM433 361h2v4h-2zM457 329h4v3h-4zM563 242h3v3h-3zM361 395h4v4h-4zM402 360h2v4h-2zM363 340h3v2h-3zM469 277h2v4h-2zM576 339h3v2h-3zM519 362h2v2h-2zM432 334h4v4h-4zM427 359h4v2h-4zM443 360h3v4h-3zM368 354h4v4h-4zM442 281h2v4h-2zM396 369h2v3h-2zM566 379h3v3h-3zM488 328h2v3h-2zM384 372h3v4h-3zM494 281h2v2h-2zM396 291h4v2h-4zM461 282h2v4h-2zM569 266h2v4h-2zM556 330h2v4h-2zM543 258h2v2h-2zM551 288h3v3h-3zM541 291h4v3h-4zM419 372h4v3h-4zM436 374h3v4h-3zM510 337h3v4h-3zM557 380h2v3h-2zM365 342h4v4h-4zM364 259h3v3h-3zM388 254h4v2h-4zM440 348h3v4h-3zM566 255h3v2h-3zM363 341h4v4h-4zM475 351h3v4h-3zM402 327h3v3h-3zM595 372h4v2h-4zM586 349h3v3h-3zM358 355h2v2h-2zM586 242h4v2h-4zM397 339h3v2h-3zM383 345h2v3h-2zM400 357h4v2h-4zM474 262h2v2h-2zM417 356h3v3h-3zM496 359h4v4h-4zM525 366h4v4h-4zM354 373h2v3h-2zM367 370h3v4h-3zM455 338h3v2h-3zM530 346h4v4h-4zM486 244h3v4h-3zM399 375h3v2h-3zM532 245h3v4h-3zM440 248h4v2h-4zM443 254h2v3h-2zM545 268h4v4h-4zM589 360h4v4h-4zM412 251h3v3h-3zM404 421h2v3h-2zM383 435h2v3h-2zM362 426h2v2h-2zM404 613h3v3h-3zM408 647h4v4h-4zM580 590h2v3h-2zM553 635h3v2h-3zM409 614h2v4h-2zM519 611h2v3h-2zM404 653h4v3h-4zM494 608h4v4h-4zM568 663h4v3h-4zM580 634h4v3h-4zM482 652h2v3h-2zM530 610h2v2h-2zM397 636h2v4h-2zM516 660h4v2h-4zM524 610h3v4h-3zM431 620h4v3h-4zM507 655h2v2h-2zM455 590h2v2h-2zM393 631h3v4h-3zM574 600h3v2h-3zM510 645h2v4h-2zM488 661h3v2h-3zM403 620h2v3h-2zM544 647h3v3h-3zM403 656h4v4h-4zM442 617h3v4h-3zM446 667h4v3h-4zM522 614h2v2h-2zM539 649h2v2h-2zM459 636h3v4h-3zM496 593h3v3h-3zM431 622h3v2h-3zM483 608h2v2h-2zM435 641h4v2h-4zM581 619h3v3h-3zM510 665h4v4h-4zM558 660h3v3h-3zM465 656h2v2h-2zM436 659h2v4h-2zM426 614h4v2h-4zM558 450h3v2h-3zM535 465h3v2h-3zM515 437h2v3h-2zM554 462h2v3h-2zM529 427h3v3h-3zM500 413h3v2h-3zM551 445h3v2h-3zM497 420h3v3h-3zM568 680h2v2h-2z" fill="#927c5a"/><path d="M498 121h2v4h-2zM441 144h2v2h-2zM559 149h4v2h-4zM552 159h2v2h-2zM556 137h2v3h-2zM529 158h2v3h-2zM579 154h2v4h-2zM534 147h3v4h-3zM574 121h4v3h-4zM571 159h3v3h-3zM418 137h4v3h-4zM588 156h4v4h-4zM409 136h4v3h-4zM495 131h3v2h-3zM557 143h2v3h-2zM524 153h4v2h-4zM445 139h4v4h-4zM553 135h3v3h-3zM554 195h3v4h-3zM584 160h4v3h-4zM575 183h2v4h-2zM578 170h2v3h-2zM597 178h3v2h-3zM523 216h4v3h-4zM557 233h3v4h-3zM571 224h4v4h-4zM531 232h4v4h-4zM595 220h3v2h-3zM556 232h2v3h-2zM576 176h3v2h-3zM520 225h4v4h-4zM543 169h3v4h-3zM564 210h3v2h-3zM587 203h4v3h-4zM433 229h2v3h-2zM431 204h3v4h-3zM418 195h4v4h-4zM423 198h2v3h-2zM413 218h4v4h-4zM431 209h2v3h-2zM400 210h4v3h-4zM361 294h4v2h-4zM457 338h2v4h-2zM563 293h2v3h-2zM438 247h3v4h-3zM419 397h2v2h-2zM368 365h3v3h-3zM463 350h2v3h-2zM528 333h2v4h-2zM399 311h3v2h-3zM518 262h4v2h-4zM532 376h2v2h-2zM468 390h2v3h-2zM461 249h2v4h-2zM422 269h2v4h-2zM443 383h3v3h-3zM465 355h3v4h-3zM398 380h2v2h-2zM566 398h4v2h-4zM582 347h4v3h-4zM575 351h4v2h-4zM533 243h4v4h-4zM507 352h2v3h-2zM474 396h2v2h-2zM409 252h4v4h-4zM445 365h2v4h-2zM510 247h4v4h-4zM494 332h3v3h-3zM436 244h2v3h-2zM478 328h3v4h-3zM477 307h2v4h-2zM550 334h3v4h-3zM387 341h4v3h-4zM507 352h2v4h-2zM579 265h3v2h-3zM449 289h4v2h-4zM377 299h3v2h-3zM571 262h2v4h-2zM510 365h2v3h-2zM422 354h3v3h-3zM487 386h4v4h-4zM382 391h2v2h-2zM552 303h2v3h-2zM413 399h4v2h-4zM562 394h3v4h-3zM557 265h3v2h-3zM590 316h2v3h-2zM549 260h3v2h-3zM430 356h2v2h-2zM492 316h2v3h-2zM405 288h4v4h-4zM398 323h2v2h-2zM595 282h3v3h-3zM467 271h2v4h-2zM471 362h2v2h-2zM595 318h2v2h-2zM522 249h2v2h-2zM479 350h4v2h-4zM513 280h3v4h-3zM364 276h4v3h-4zM553 270h3v2h-3zM538 330h4v4h-4zM517 383h4v3h-4zM505 274h4v2h-4zM556 273h4v4h-4zM574 305h3v4h-3zM570 376h4v2h-4zM493 331h3v4h-3zM513 384h4v2h-4zM470 398h4v3h-4zM406 253h2v4h-2zM579 332h3v2h-3zM397 362h4v3h-4zM406 332h2v4h-2zM469 327h4v3h-4zM488 370h3v2h-3zM377 339h2v4h-2zM395 336h4v4h-4zM459 280h4v4h-4zM549 310h2v2h-2zM484 313h4v4h-4zM401 318h2v2h-2zM547 250h4v4h-4zM594 292h3v3h-3zM409 370h2v4h-2zM497 288h4v4h-4zM371 249h3v3h-3zM522 265h4v4h-4zM538 317h2v3h-2zM426 397h3v2h-3zM362 419h3v3h-3zM352 435h2v2h-2zM423 402h2v3h-2zM388 423h3v2h-3zM418 601h4v2h-4zM482 644h4v3h-4zM532 606h4v3h-4zM563 632h3v3h-3zM575 595h2v4h-2zM557 608h4v4h-4zM510 646h3v3h-3zM400 591h4v3h-4zM579 601h2v4h-2zM556 660h4v4h-4zM578 636h2v3h-2zM536 599h2v3h-2zM480 627h4v2h-4zM452 611h2v3h-2zM388 591h2v2h-2zM526 599h4v2h-4zM437 651h3v2h-3zM473 628h2v4h-2zM421 628h2v4h-2zM453 616h4v2h-4zM470 653h4v4h-4zM412 652h4v4h-4zM427 640h4v3h-4zM431 608h3v2h-3zM442 599h3v3h-3zM503 655h3v2h-3zM476 609h4v2h-4zM449 660h4v4h-4zM443 653h3v4h-3zM554 646h4v2h-4zM389 643h4v2h-4zM399 666h3v2h-3zM537 650h4v3h-4zM389 650h3v2h-3zM486 621h3v4h-3zM538 639h3v2h-3zM556 661h4v2h-4zM544 614h3v4h-3zM539 614h4v4h-4zM407 607h3v3h-3zM558 654h3v3h-3zM511 652h2v2h-2zM417 630h4v2h-4zM583 612h4v2h-4zM563 457h2v3h-2zM489 469h3v2h-3zM571 673h3v3h-3zM575 688h3v3h-3z" fill="#55503f"/><path d="M473 134h3v4h-3zM450 130h4v4h-4zM419 137h3v2h-3zM592 150h4v2h-4zM434 138h3v2h-3zM471 126h4v4h-4zM535 154h4v3h-4zM564 122h3v2h-3zM441 146h3v3h-3zM530 125h3v4h-3zM520 132h4v2h-4zM523 131h2v4h-2zM439 152h3v3h-3zM526 140h2v2h-2zM435 150h3v4h-3zM432 121h4v2h-4zM525 150h2v2h-2zM491 138h2v2h-2zM553 201h4v2h-4zM584 165h2v3h-2zM567 227h4v3h-4zM579 175h4v2h-4zM547 219h3v2h-3zM559 204h2v3h-2zM532 193h3v4h-3zM570 192h3v3h-3zM550 187h3v4h-3zM569 228h4v2h-4zM591 222h3v3h-3zM521 200h3v3h-3zM571 208h3v4h-3zM571 169h2v2h-2zM542 234h2v4h-2zM577 228h4v4h-4zM521 183h2v2h-2zM518 331h3v3h-3zM506 332h4v2h-4zM550 250h3v2h-3zM401 367h2v3h-2zM478 398h4v3h-4zM424 256h3v4h-3zM436 391h3v2h-3zM400 393h3v2h-3zM553 245h2v4h-2zM474 340h3v4h-3zM470 369h4v3h-4zM422 302h3v4h-3zM579 291h3v4h-3zM436 297h4v4h-4zM401 326h4v4h-4zM466 266h4v4h-4zM463 249h3v4h-3zM530 276h2v2h-2zM553 280h3v2h-3zM493 364h3v2h-3zM474 345h4v3h-4zM480 279h4v4h-4zM518 346h2v4h-2zM393 301h2v3h-2zM417 263h2v3h-2zM455 317h2v3h-2zM588 365h3v3h-3zM438 313h2v4h-2zM431 353h3v4h-3zM405 309h2v3h-2zM401 350h2v4h-2zM438 309h2v2h-2zM509 280h4v4h-4zM478 322h4v3h-4zM372 326h4v2h-4zM407 280h4v3h-4zM487 241h2v3h-2zM537 300h4v4h-4zM587 396h2v4h-2zM458 394h2v3h-2zM587 273h3v3h-3zM588 303h2v4h-2zM394 274h2v3h-2zM590 256h4v2h-4zM489 270h3v4h-3zM406 334h2v3h-2zM528 357h3v4h-3zM401 244h2v4h-2zM401 372h2v4h-2zM561 344h4v2h-4zM414 369h3v4h-3zM455 300h3v3h-3zM562 282h4v4h-4zM505 280h4v3h-4zM425 346h4v4h-4zM573 343h3v3h-3zM465 256h2v2h-2zM514 267h3v3h-3zM370 319h2v3h-2zM488 240h2v4h-2zM553 359h3v2h-3zM386 336h4v4h-4zM506 272h4v4h-4zM365 249h3v2h-3zM519 263h2v4h-2zM457 329h2v2h-2zM579 336h4v4h-4zM523 252h4v2h-4zM482 262h3v4h-3zM509 252h4v2h-4zM572 291h3v3h-3zM540 274h2v4h-2zM441 276h4v4h-4zM377 395h4v3h-4zM441 345h2v4h-2zM456 281h2v2h-2zM452 257h3v4h-3zM416 326h4v3h-4zM467 336h2v2h-2zM579 304h4v4h-4zM459 272h4v4h-4zM532 251h2v4h-2zM583 368h3v4h-3zM571 378h3v2h-3zM579 316h3v2h-3zM445 256h3v4h-3zM591 350h2v4h-2zM471 358h2v3h-2zM392 277h3v4h-3zM483 350h3v3h-3zM478 368h4v4h-4zM479 397h3v3h-3zM410 309h2v2h-2zM391 325h3v3h-3zM480 320h4v2h-4zM513 324h4v4h-4zM553 367h2v4h-2zM592 335h4v2h-4zM413 397h3v3h-3zM361 439h3v2h-3zM394 419h2v2h-2zM409 600h2v2h-2zM515 593h2v4h-2zM484 604h4v2h-4zM513 644h3v2h-3zM452 659h2v4h-2zM493 633h3v2h-3zM450 598h3v2h-3zM425 643h3v3h-3zM525 654h3v2h-3zM393 662h4v3h-4zM443 596h4v2h-4zM428 647h3v2h-3zM512 665h3v4h-3zM429 640h3v4h-3zM406 596h4v4h-4zM498 663h3v3h-3zM492 665h2v3h-2zM483 595h4v4h-4zM387 662h4v4h-4zM528 638h2v4h-2zM462 644h4v2h-4zM416 606h4v2h-4zM446 600h3v2h-3zM551 613h3v2h-3zM430 652h2v3h-2zM575 655h3v2h-3zM440 623h3v2h-3zM494 658h4v3h-4zM423 617h2v2h-2zM408 601h3v4h-3zM410 655h4v3h-4zM441 650h2v2h-2zM471 617h2v4h-2zM470 661h2v2h-2zM397 660h3v4h-3zM463 661h3v3h-3zM560 650h3v2h-3zM409 646h2v3h-2zM500 455h2v3h-2zM590 466h2v2h-2zM496 416h2v3h-2zM483 432h3v3h-3zM492 430h2v3h-2zM552 432h3v3h-3zM548 468h3v3h-3zM482 431h2v2h-2zM538 430h3v2h-3zM568 456h2v2h-2zM564 686h3v2h-3z" fill="#9c8866"/><path d="M412 132h4v4h-4zM452 145h3v2h-3zM559 136h2v2h-2zM547 137h4v3h-4zM533 125h4v3h-4zM566 140h2v2h-2zM550 142h4v2h-4zM540 136h4v4h-4zM513 122h2v3h-2zM470 123h4v3h-4zM454 137h4v4h-4zM558 147h4v4h-4zM449 133h3v3h-3zM568 153h2v3h-2zM490 153h4v3h-4zM441 148h3v4h-3zM492 141h3v4h-3zM594 153h3v2h-3zM596 195h3v3h-3zM587 193h3v3h-3zM555 212h2v2h-2zM585 228h2v4h-2zM585 206h3v2h-3zM541 207h4v4h-4zM537 209h2v2h-2zM534 213h3v3h-3zM537 191h3v2h-3zM552 176h4v2h-4zM482 290h3v2h-3zM449 300h3v2h-3zM407 291h2v4h-2zM447 315h4v3h-4zM531 341h4v4h-4zM595 370h3v4h-3zM526 388h4v2h-4zM545 244h4v4h-4zM470 273h4v2h-4zM587 384h3v4h-3zM590 303h3v4h-3zM479 264h4v2h-4zM525 288h2v3h-2zM423 286h4v2h-4zM405 261h2v3h-2zM372 394h4v2h-4zM594 277h4v4h-4zM505 308h3v2h-3zM567 315h4v3h-4zM525 241h4v3h-4zM551 283h3v2h-3zM358 297h2v4h-2zM464 262h2v3h-2zM557 301h3v3h-3zM577 254h4v2h-4zM464 282h3v4h-3zM498 338h4v2h-4zM576 334h4v2h-4zM487 318h2v2h-2zM425 400h3v3h-3zM523 261h2v4h-2zM391 389h3v2h-3zM375 387h4v3h-4zM560 388h3v4h-3zM462 290h2v4h-2zM400 343h2v2h-2zM543 297h4v3h-4zM395 335h4v4h-4zM531 310h4v3h-4zM395 395h4v4h-4zM437 291h4v2h-4zM534 387h3v2h-3zM395 379h4v4h-4zM470 294h3v4h-3zM532 333h4v2h-4zM439 359h3v3h-3zM436 398h3v2h-3zM562 269h2v3h-2zM361 272h3v2h-3zM498 294h4v2h-4zM539 332h4v2h-4zM433 363h4v3h-4zM530 261h3v4h-3zM555 386h4v4h-4zM472 332h3v2h-3zM391 327h3v2h-3zM406 274h3v3h-3zM586 263h4v4h-4zM583 289h4v4h-4zM376 356h3v3h-3zM521 264h4v3h-4zM385 320h2v3h-2zM576 381h2v4h-2zM444 385h4v3h-4zM457 390h3v3h-3zM479 300h2v4h-2zM590 254h3v3h-3zM529 329h4v3h-4zM476 329h4v3h-4zM398 282h3v3h-3zM441 320h2v3h-2zM465 393h2v4h-2zM384 374h2v2h-2zM484 369h3v3h-3zM471 291h4v4h-4zM488 329h4v2h-4zM404 363h4v3h-4zM491 275h2v4h-2zM459 388h2v2h-2zM404 396h3v3h-3zM394 438h2v2h-2zM428 415h2v3h-2zM507 615h4v4h-4zM445 633h2v2h-2zM570 594h4v3h-4zM496 591h4v4h-4zM453 628h4v3h-4zM390 649h4v2h-4zM500 603h3v4h-3zM432 607h4v3h-4zM464 645h4v3h-4zM476 592h3v2h-3zM487 622h4v2h-4zM547 636h3v4h-3zM540 627h4v3h-4zM558 591h3v3h-3zM512 662h3v3h-3zM571 642h3v2h-3zM465 639h4v2h-4zM445 620h2v4h-2zM485 602h2v2h-2zM534 660h2v2h-2zM463 601h4v2h-4zM539 658h3v2h-3zM462 626h2v3h-2zM520 632h3v3h-3zM468 643h2v3h-2zM398 658h2v4h-2zM466 629h2v3h-2zM417 666h4v4h-4zM392 650h3v2h-3zM553 603h2v2h-2zM522 644h2v4h-2zM549 591h4v3h-4zM546 598h4v2h-4zM486 613h4v4h-4zM534 650h3v3h-3zM436 636h3v4h-3zM436 620h4v4h-4zM556 602h3v4h-3zM541 404h2v3h-2zM514 468h3v3h-3zM492 450h2v2h-2zM545 400h2v3h-2zM577 451h3v3h-3zM513 415h2v2h-2zM493 416h3v3h-3zM485 407h2v2h-2zM518 435h2v3h-2zM566 668h2v2h-2zM581 678h3v3h-3zM576 691h2v2h-2zM571 681h2v3h-2z" fill="#7d6c52"/><path d="M519 127h4v2h-4zM439 140h4v3h-4zM549 154h2v4h-2zM561 159h4v2h-4zM547 122h4v3h-4zM531 142h4v2h-4zM449 156h4v4h-4zM565 143h2v3h-2zM593 150h2v2h-2zM558 155h2v3h-2zM531 133h4v3h-4zM435 147h3v4h-3zM541 135h3v2h-3zM509 157h2v3h-2zM443 133h4v2h-4zM464 147h3v4h-3zM588 128h2v4h-2zM420 128h2v4h-2zM405 122h3v4h-3zM411 145h2v2h-2zM582 182h3v3h-3zM539 191h4v2h-4zM537 174h3v4h-3zM582 163h3v4h-3zM527 182h4v3h-4zM598 169h2v4h-2zM590 184h2v2h-2zM544 183h3v3h-3zM390 269h4v4h-4zM545 262h3v3h-3zM385 296h3v4h-3zM555 350h4v3h-4zM569 359h3v3h-3zM387 337h3v2h-3zM584 300h2v4h-2zM525 328h3v3h-3zM480 363h4v2h-4zM436 380h4v4h-4zM502 255h4v2h-4zM562 291h3v3h-3zM422 241h2v3h-2zM553 340h4v2h-4zM492 327h3v3h-3zM466 271h2v3h-2zM432 304h2v2h-2zM381 399h3v4h-3zM425 250h4v4h-4zM464 357h3v2h-3zM472 297h3v3h-3zM547 354h2v3h-2zM440 283h2v2h-2zM457 372h4v4h-4zM386 288h3v4h-3zM379 280h4v3h-4zM465 349h4v4h-4zM586 277h3v4h-3zM381 289h2v3h-2zM455 318h4v4h-4zM491 325h4v4h-4zM584 322h4v2h-4zM587 366h2v3h-2zM431 285h4v4h-4zM354 351h2v3h-2zM541 361h2v4h-2zM369 330h4v4h-4zM459 356h4v4h-4zM569 242h3v3h-3zM585 324h4v3h-4zM473 322h2v3h-2zM430 284h2v2h-2zM542 334h2v2h-2zM575 320h3v3h-3zM492 397h3v3h-3zM575 245h4v3h-4zM495 294h3v2h-3zM544 332h4v2h-4zM430 392h2v3h-2zM457 345h4v3h-4zM447 299h3v3h-3zM491 323h4v4h-4zM537 379h2v4h-2zM573 347h4v3h-4zM467 359h4v4h-4zM462 274h2v4h-2zM383 301h4v3h-4zM375 361h2v2h-2zM547 344h2v2h-2zM509 265h3v3h-3zM443 257h2v3h-2zM543 386h4v4h-4zM419 394h3v3h-3zM520 387h2v4h-2zM549 324h2v3h-2zM424 268h4v2h-4zM353 315h2v2h-2zM510 390h4v4h-4zM445 372h2v3h-2zM404 385h4v2h-4zM526 343h3v3h-3zM440 289h4v2h-4zM485 400h3v4h-3zM475 346h4v4h-4zM537 262h2v2h-2zM478 285h2v2h-2zM411 260h4v2h-4zM480 385h4v3h-4zM391 394h2v2h-2zM401 280h4v3h-4zM441 304h3v2h-3zM548 329h3v2h-3zM547 358h3v2h-3zM561 248h2v4h-2zM588 306h2v2h-2zM427 280h3v3h-3zM430 264h4v2h-4zM417 303h4v3h-4zM494 351h4v4h-4zM439 265h4v2h-4zM488 327h3v2h-3zM446 271h4v2h-4zM517 352h3v2h-3zM545 328h4v3h-4zM406 286h3v2h-3zM449 254h4v3h-4zM430 335h2v3h-2zM593 339h3v4h-3zM375 436h2v3h-2zM392 405h2v2h-2zM368 427h2v3h-2zM360 397h2v3h-2zM413 439h2v2h-2zM382 435h3v3h-3zM350 414h3v2h-3zM526 647h4v4h-4zM461 620h2v3h-2zM447 647h3v3h-3zM452 597h2v3h-2zM454 647h4v2h-4zM544 659h3v2h-3zM550 614h4v3h-4zM414 658h4v4h-4zM407 594h3v3h-3zM402 662h3v4h-3zM481 656h3v3h-3zM548 659h4v2h-4zM501 638h4v3h-4zM496 656h3v3h-3zM469 665h3v3h-3zM533 637h4v4h-4zM539 609h3v4h-3zM463 668h3v3h-3zM479 662h2v2h-2zM450 666h4v4h-4zM450 665h2v2h-2zM452 599h2v3h-2zM468 653h3v4h-3zM433 604h4v2h-4zM395 648h4v2h-4zM562 601h4v3h-4zM420 617h3v4h-3zM431 619h3v2h-3zM456 626h2v4h-2zM527 612h2v4h-2zM418 599h3v4h-3zM514 613h3v4h-3zM573 661h3v3h-3zM477 634h2v2h-2zM538 604h2v4h-2zM533 599h2v4h-2zM563 653h4v3h-4zM473 641h2v2h-2zM464 644h2v4h-2zM578 620h4v3h-4zM393 633h3v4h-3zM522 635h3v4h-3zM484 653h4v3h-4zM489 618h2v2h-2zM546 648h3v2h-3zM569 616h3v2h-3zM532 625h2v2h-2zM543 615h3v4h-3zM566 666h2v3h-2zM396 638h4v3h-4zM535 427h3v3h-3zM586 439h2v3h-2zM514 462h3v3h-3zM523 441h2v3h-2zM585 427h3v3h-3zM574 411h3v3h-3zM493 434h3v3h-3zM490 436h3v2h-3zM528 464h3v3h-3zM549 419h2v2h-2zM539 400h2v2h-2zM506 415h3v3h-3zM556 406h3v2h-3z" fill="#aa9470"/><path d="M534 154h2v2h-2zM516 139h3v4h-3zM430 139h2v3h-2zM427 132h2v4h-2zM520 159h4v4h-4zM429 138h4v3h-4zM419 158h4v2h-4zM573 130h4v3h-4zM432 158h4v3h-4zM409 153h3v4h-3zM569 151h3v3h-3zM566 157h4v4h-4zM526 125h3v2h-3zM527 151h4v2h-4zM553 127h3v2h-3zM530 123h4v3h-4zM428 127h2v2h-2zM479 148h3v3h-3zM522 177h4v4h-4zM598 210h3v4h-3zM588 193h4v3h-4zM594 207h3v4h-3zM522 222h3v3h-3zM597 188h4v3h-4zM572 208h4v2h-4zM583 177h2v4h-2zM582 168h2v2h-2zM548 219h4v3h-4zM566 194h2v4h-2zM552 226h3v4h-3zM522 230h4v3h-4zM561 183h2v3h-2zM407 204h4v2h-4zM403 217h2v2h-2zM424 163h4v3h-4zM436 183h4v4h-4zM412 174h2v3h-2zM551 382h2v3h-2zM379 385h4v4h-4zM585 327h4v4h-4zM361 344h3v3h-3zM441 368h4v2h-4zM394 340h4v3h-4zM511 363h3v4h-3zM464 279h4v3h-4zM567 356h3v3h-3zM516 397h4v3h-4zM520 306h4v3h-4zM536 286h3v4h-3zM397 360h3v2h-3zM530 344h4v2h-4zM409 361h3v3h-3zM484 250h2v3h-2zM368 335h3v4h-3zM365 300h4v4h-4zM405 273h3v3h-3zM528 318h4v4h-4zM480 374h2v4h-2zM356 325h3v2h-3zM425 372h2v4h-2zM375 301h4v3h-4zM509 293h2v4h-2zM497 327h4v4h-4zM588 293h3v2h-3zM430 288h4v2h-4zM393 330h2v3h-2zM392 262h2v2h-2zM490 318h3v4h-3zM413 299h4v2h-4zM373 310h3v4h-3zM363 298h2v2h-2zM554 331h2v4h-2zM437 374h2v3h-2zM385 371h2v4h-2zM560 254h4v3h-4zM510 320h4v3h-4zM358 336h2v3h-2zM549 295h2v3h-2zM531 287h2v4h-2zM584 392h3v4h-3zM438 366h4v2h-4zM462 368h2v3h-2zM434 398h3v4h-3zM387 337h4v3h-4zM449 381h4v2h-4zM567 245h2v2h-2zM506 268h4v2h-4zM507 305h3v3h-3zM537 325h2v4h-2zM357 276h2v2h-2zM496 267h3v4h-3zM444 342h4v4h-4zM497 248h2v4h-2zM486 316h2v2h-2zM396 301h3v4h-3zM577 258h3v3h-3zM388 372h4v2h-4zM534 243h3v3h-3zM527 258h4v2h-4zM385 320h4v4h-4zM447 322h4v3h-4zM587 358h2v3h-2zM372 255h4v4h-4zM353 355h2v4h-2zM551 295h3v4h-3zM469 335h4v3h-4zM506 246h4v2h-4zM393 388h4v3h-4zM500 268h4v4h-4zM498 327h3v2h-3zM476 366h4v4h-4zM502 348h3v2h-3zM515 305h2v4h-2zM522 245h2v2h-2zM495 303h2v2h-2zM519 294h4v2h-4zM513 247h2v2h-2zM364 275h4v2h-4zM587 312h3v2h-3zM354 398h2v3h-2zM488 388h2v2h-2zM454 379h2v4h-2zM390 357h2v2h-2zM361 423h2v3h-2zM390 407h3v2h-3zM345 405h3v2h-3zM387 402h2v2h-2zM384 435h2v3h-2zM388 629h3v4h-3zM476 624h4v4h-4zM548 606h2v2h-2zM421 626h4v3h-4zM468 606h2v4h-2zM395 617h4v2h-4zM557 649h4v3h-4zM493 594h2v3h-2zM555 595h4v2h-4zM443 658h2v2h-2zM462 608h3v4h-3zM439 662h4v3h-4zM398 627h2v4h-2zM516 613h4v4h-4zM436 638h3v3h-3zM540 591h3v2h-3zM485 665h3v2h-3zM569 593h2v3h-2zM524 633h3v2h-3zM540 591h3v2h-3zM562 596h4v3h-4zM579 606h2v2h-2zM563 636h2v4h-2zM542 596h3v4h-3zM473 619h2v4h-2zM493 603h3v2h-3zM502 607h3v2h-3zM528 623h3v3h-3zM571 636h3v2h-3zM579 654h3v4h-3zM477 644h3v2h-3zM537 617h4v3h-4zM470 650h2v2h-2zM410 610h2v3h-2zM532 655h3v4h-3zM475 657h3v3h-3zM508 618h3v3h-3zM392 594h3v3h-3zM564 611h4v3h-4zM439 640h4v3h-4zM421 656h4v3h-4zM528 654h2v4h-2zM404 619h4v2h-4zM498 433h2v3h-2zM584 470h2v2h-2zM506 454h3v2h-3zM490 409h2v2h-2zM513 432h3v3h-3zM543 458h2v3h-2zM524 436h3v2h-3zM548 445h3v3h-3zM569 691h2v3h-2zM565 681h3v2h-3z" fill="#a08a66"/><path d="M408 155h2v2h-2zM452 139h4v2h-4zM416 137h3v3h-3zM429 120h3v3h-3zM454 148h4v4h-4zM450 125h4v3h-4zM460 150h2v2h-2zM490 138h2v4h-2zM559 126h2v2h-2zM564 142h2v4h-2zM487 150h4v3h-4zM432 141h4v3h-4zM568 153h2v3h-2zM464 140h3v2h-3zM541 140h2v4h-2zM586 139h2v3h-2zM580 173h4v4h-4zM591 174h4v3h-4zM572 224h3v3h-3zM542 231h4v2h-4zM524 199h4v3h-4zM577 223h4v4h-4zM597 219h4v2h-4zM564 211h4v2h-4zM541 210h3v4h-3zM554 181h4v4h-4zM543 190h3v2h-3zM434 216h2v3h-2zM399 207h4v4h-4zM436 186h4v4h-4zM434 185h4v4h-4zM548 262h3v2h-3zM560 286h2v3h-2zM427 336h3v2h-3zM584 245h2v4h-2zM446 330h3v3h-3zM382 376h3v2h-3zM368 304h4v4h-4zM398 265h4v3h-4zM364 319h4v4h-4zM362 246h4v3h-4zM497 321h4v4h-4zM524 323h4v3h-4zM567 268h2v3h-2zM425 336h3v3h-3zM452 288h2v4h-2zM411 276h4v2h-4zM404 270h4v2h-4zM575 328h3v3h-3zM538 318h4v4h-4zM367 342h4v3h-4zM408 384h4v4h-4zM588 292h4v3h-4zM429 257h2v3h-2zM425 337h4v2h-4zM429 394h3v3h-3zM585 314h4v2h-4zM547 373h2v3h-2zM527 366h2v3h-2zM428 313h2v4h-2zM437 256h4v4h-4zM557 339h3v2h-3zM385 370h4v4h-4zM452 319h4v3h-4zM419 326h2v3h-2zM553 299h2v4h-2zM554 362h4v3h-4zM535 351h3v3h-3zM432 240h4v2h-4zM512 353h2v2h-2zM371 335h4v4h-4zM355 262h2v2h-2zM532 279h3v4h-3zM377 325h2v3h-2zM415 399h2v3h-2zM446 357h2v3h-2zM567 296h3v2h-3zM373 372h4v4h-4zM520 390h4v2h-4zM488 328h3v4h-3zM567 380h3v3h-3zM589 276h3v4h-3zM398 274h3v4h-3zM518 279h3v4h-3zM511 322h4v2h-4zM513 349h4v2h-4zM529 276h4v4h-4zM443 334h3v2h-3zM527 259h2v2h-2zM353 347h2v4h-2zM450 394h3v3h-3zM574 317h4v4h-4zM562 381h4v2h-4zM551 253h3v4h-3zM373 320h3v2h-3zM569 330h4v4h-4zM584 298h2v2h-2zM501 270h3v2h-3zM365 359h2v4h-2zM424 392h4v4h-4zM553 300h4v3h-4zM544 288h2v3h-2zM396 368h2v4h-2zM518 293h3v3h-3zM362 273h3v3h-3zM453 293h2v3h-2zM566 325h2v2h-2zM526 336h2v4h-2zM587 284h4v2h-4zM537 394h3v4h-3zM542 259h2v4h-2zM502 362h4v2h-4zM443 290h4v3h-4zM525 337h3v3h-3zM403 304h2v2h-2zM480 342h3v3h-3zM551 376h3v3h-3zM560 269h3v2h-3zM589 285h2v4h-2zM529 277h2v2h-2zM405 307h3v3h-3zM439 262h2v3h-2zM579 273h3v2h-3zM372 431h3v3h-3zM342 405h3v2h-3zM396 415h3v3h-3zM432 439h3v3h-3zM377 437h2v2h-2zM380 423h2v2h-2zM506 628h2v4h-2zM536 656h2v3h-2zM570 638h3v4h-3zM424 655h4v3h-4zM544 640h3v2h-3zM440 597h2v3h-2zM408 651h2v2h-2zM426 612h4v3h-4zM526 660h4v4h-4zM476 643h4v3h-4zM496 596h3v4h-3zM532 646h3v2h-3zM517 625h3v3h-3zM509 625h3v4h-3zM401 659h2v2h-2zM565 635h4v4h-4zM409 653h4v4h-4zM389 639h3v2h-3zM441 605h2v4h-2zM442 624h3v4h-3zM389 642h2v4h-2zM556 648h2v3h-2zM413 616h4v2h-4zM441 595h3v3h-3zM544 664h2v2h-2zM408 612h4v2h-4zM468 617h4v3h-4zM503 644h4v3h-4zM518 666h2v3h-2zM409 592h4v2h-4zM429 659h4v3h-4zM551 614h4v4h-4zM501 634h3v4h-3zM477 596h2v2h-2zM392 641h4v2h-4zM387 647h2v4h-2zM488 622h3v2h-3zM462 626h4v3h-4zM538 652h2v3h-2zM483 600h4v3h-4zM508 618h3v2h-3zM503 611h4v4h-4zM426 621h4v4h-4zM557 635h2v4h-2zM525 599h4v3h-4zM521 665h2v3h-2zM565 643h4v2h-4zM528 624h3v4h-3zM506 432h2v3h-2zM529 469h3v3h-3zM564 413h2v2h-2zM519 407h3v2h-3zM582 437h2v3h-2zM519 441h2v2h-2zM526 449h3v3h-3zM557 413h2v2h-2zM493 463h3v3h-3zM491 459h3v3h-3zM561 442h3v2h-3zM578 429h3v2h-3zM498 451h3v3h-3zM502 442h2v3h-2zM546 407h2v3h-2zM528 429h2v2h-2zM579 690h3v2h-3zM563 674h2v3h-2z" fill="#5a5246"/><path d="M527 179h2v3h-2zM571 172h4v3h-4zM556 171h2v4h-2zM556 210h3v3h-3zM536 219h3v4h-3zM550 188h4v4h-4zM534 164h4v3h-4zM529 165h3v3h-3zM550 205h3v3h-3zM567 167h4v2h-4zM554 216h3v2h-3zM596 205h3v2h-3zM583 223h4v4h-4zM525 216h2v2h-2zM534 189h4v2h-4zM424 234h3v4h-3zM403 165h3v4h-3zM410 194h2v3h-2zM416 221h4v2h-4zM419 206h3v3h-3zM404 235h2v2h-2zM565 329h2v4h-2zM357 275h2v4h-2zM529 253h4v2h-4zM586 244h2v3h-2zM589 343h3v3h-3zM566 320h2v3h-2zM450 331h2v3h-2zM536 272h4v3h-4zM480 290h2v3h-2zM501 271h2v3h-2zM520 318h3v3h-3zM574 254h4v2h-4zM593 327h3v2h-3zM395 377h3v3h-3zM538 349h4v2h-4zM367 328h4v2h-4zM518 355h3v2h-3zM412 247h3v2h-3zM405 378h2v2h-2zM575 330h3v4h-3zM565 270h4v4h-4zM482 297h3v3h-3zM481 284h3v2h-3zM418 388h4v3h-4zM425 330h4v3h-4zM529 330h2v4h-2zM494 325h4v3h-4zM376 276h4v4h-4zM486 258h2v3h-2zM462 341h2v3h-2zM380 320h4v2h-4zM446 374h3v3h-3zM355 275h2v3h-2zM372 253h2v2h-2zM540 245h3v3h-3zM389 389h2v2h-2zM464 360h4v2h-4zM373 301h3v2h-3zM357 334h2v2h-2zM365 293h2v3h-2zM425 255h3v4h-3zM467 383h3v2h-3zM487 375h4v3h-4zM425 303h4v2h-4zM576 242h4v4h-4zM578 330h2v3h-2zM368 354h3v2h-3zM495 241h4v3h-4zM368 247h3v3h-3zM504 352h3v2h-3zM439 306h2v2h-2zM367 345h2v4h-2zM435 373h3v4h-3zM540 312h4v4h-4zM487 309h4v3h-4zM558 328h3v4h-3zM502 348h4v2h-4zM578 302h4v3h-4zM480 393h4v2h-4zM446 326h3v2h-3zM363 384h2v3h-2zM458 243h4v2h-4zM362 332h3v4h-3zM510 253h3v2h-3zM555 336h4v2h-4zM479 299h2v4h-2zM594 304h2v3h-2zM543 317h3v4h-3zM547 306h3v4h-3zM449 360h3v2h-3zM562 364h3v2h-3zM455 262h4v4h-4zM528 366h3v3h-3zM462 294h3v3h-3zM382 379h4v2h-4zM395 365h3v3h-3zM543 390h4v4h-4zM562 292h3v3h-3zM580 328h2v4h-2zM453 265h2v2h-2zM546 328h2v3h-2zM580 265h4v2h-4zM485 292h3v3h-3zM431 343h2v2h-2zM586 256h4v2h-4zM482 336h3v3h-3zM554 292h2v4h-2zM540 391h3v4h-3zM507 341h2v3h-2zM362 326h2v3h-2zM434 316h4v2h-4zM511 271h4v4h-4zM338 405h2v2h-2zM389 427h3v3h-3zM422 416h2v2h-2zM409 625h3v2h-3zM434 633h4v4h-4zM418 612h4v4h-4zM413 644h3v3h-3zM442 592h3v4h-3zM427 593h3v4h-3zM508 614h2v4h-2zM465 622h4v2h-4zM500 656h2v4h-2zM501 665h2v2h-2zM581 667h3v3h-3zM511 642h4v2h-4zM544 614h2v3h-2zM521 620h3v2h-3zM576 643h2v2h-2zM489 643h2v3h-2zM481 622h4v2h-4zM581 666h4v3h-4zM542 640h4v2h-4zM469 593h3v4h-3zM485 655h3v4h-3zM531 660h2v4h-2zM579 621h3v3h-3zM467 661h3v2h-3zM417 607h2v4h-2zM455 644h2v3h-2zM486 595h4v2h-4zM429 605h3v2h-3zM457 642h3v3h-3zM446 639h2v4h-2zM483 610h3v4h-3zM537 634h3v4h-3zM558 599h2v2h-2zM451 626h3v4h-3zM519 633h2v4h-2zM413 610h3v4h-3zM499 629h2v4h-2zM524 629h3v3h-3zM582 420h3v3h-3zM490 461h2v2h-2zM570 439h2v2h-2zM568 420h2v2h-2zM588 448h3v2h-3zM527 440h2v2h-2zM577 425h2v2h-2zM565 454h3v2h-3zM586 453h2v2h-2zM559 429h2v2h-2zM570 669h2v2h-2zM577 688h2v2h-2z" fill="#4d5441"/></g></g><path d="M486 325h3v2h-3zM535 332h3v2h-3zM538 318h3v2h-3zM561 341h3v2h-3zM508 362h2v2h-2zM491 398h2v1h-2zM430 252h2v2h-2z" fill="#cfc9be"/><path d="M403.5 595 V602 M403.5 619 V633.6 M401.5 651 V668 M414.5 119.6 V124" stroke="#e6e2da" stroke-width="0.9"/></g></svg><div class="t" style="left:178.8px;top:699.3px;font-size:9.8px;transform:scaleX(0.8585);transform-origin:0 0;">Lat: 36.3912059214, Lon: -102.1992700613</div><div class="t" style="left:778.3px;top:86.2px;font-size:9.8px;transform:scaleX(0.8364);transform-origin:0 0;">Layers</div><svg class="abs" style="left:953.3px;top:87.6px" width="21" height="10" viewBox="0 0 21 10"><rect x="0.5" y="0.5" width="8" height="8" rx="1.6" fill="none" stroke="#8e8e8e" stroke-width="1"/><rect x="2.4" y="3.6" width="3" height="3" fill="#f0f0f0" stroke="#8a8a8a" stroke-width="0.7"/><rect x="3.8" y="2.2" width="3" height="3" fill="#f0f0f0" stroke="#8a8a8a" stroke-width="0.7"/><rect x="11.5" y="0.5" width="8" height="8" rx="1.6" fill="none" stroke="#8e8e8e" stroke-width="1"/><path d="M13.6 2.6 L17.4 6.4 M17.4 2.6 L13.6 6.4" stroke="#2a2a2a" stroke-width="1.3"/></svg><div class="abs" style="left:775px;top:100px;width:199px;height:595px;background:#fff;border:1px solid #c2c2c2;border-bottom:1px solid #b4b4b4;overflow:hidden"><div class="abs" style="left:0;top:0;width:197px;height:13px;background:#fff;border-bottom:1px solid #e5e5e5"></div><div class="abs" style="left:120px;top:0;width:1px;height:13px;background:#e0e0e0"></div><div class="abs" style="left:158px;top:0;width:1px;height:13px;background:#e0e0e0"></div><div class="t" style="left:1.0px;top:0.5px;font-size:9.8px;transform:scaleX(0.8567);transform-origin:0 0;">Layer</div><div class="t" style="left:123.0px;top:0.5px;font-size:9.8px;transform:scaleX(0.8519);transform-origin:0 0;">Labels</div><div class="t" style="left:161.0px;top:0.5px;font-size:9.8px;transform:scaleX(0.8520);transform-origin:0 0;">Snap</div><div class="ar arr" style="left:5.0px;top:16.299999999999997px"></div><div class="cb" style="left:17.0px;top:14.3px"></div><div class="t" style="left:32.4px;top:13.3px;font-size:9.8px;transform:scaleX(0.8840);transform-origin:0 0;">Perspective Centers</div><div class="cb" style="left:124px;top:14.3px"></div><div class="abs" style="left:0;top:25.0px;width:197px;height:11.415px;background:#efefef"></div><div class="ar ard" style="left:3.5px;top:29.215000000000003px"></div><div class="cb" style="left:17.0px;top:25.7px"></div><div class="t" style="left:32.4px;top:24.7px;font-size:9.8px;transform:scaleX(0.9364);transform-origin:0 0;">Footprints</div><div class="cb" style="left:124px;top:25.7px"></div><div class="ar ard" style="left:19.600000000000023px;top:40.629999999999995px"></div><div class="cb" style="left:32.2px;top:37.1px"></div><svg class="abs" style="left:46px;top:36.129999999999995px" width="14" height="12" viewBox="0 0 14 12"><path d="M1 4 L7 1 L13 4 L7 7 Z" fill="#f1f1f1" stroke="#bdbdbd" stroke-width="0.8"/><path d="M1 4 V8 L7 11 V7 Z" fill="#d9d9d9" stroke="#bdbdbd" stroke-width="0.8"/><path d="M13 4 V8 L7 11 V7 Z" fill="#c6c6c6" stroke="#bdbdbd" stroke-width="0.8"/></svg><div class="t" style="left:64.2px;top:36.1px;font-size:9.8px;transform:scaleX(0.7880);transform-origin:0 0;">TX_BB_z13_AT</div><div class="cb" style="left:124px;top:37.1px"></div><div class="cb" style="left:47.6px;top:48.5px"></div><div class="t" style="left:63.0px;top:47.5px;font-size:9.8px;transform:scaleX(0.8396);transform-origin:0 0;">2022112016...</div><div class="cb" style="left:124px;top:48.5px"></div><div class="cb" style="left:47.6px;top:60.0px"></div><div class="t" style="left:63.0px;top:59.0px;font-size:9.8px;transform:scaleX(0.8298);transform-origin:0 0;">2022120816...</div><div class="cb" style="left:124px;top:60.0px"></div><div class="cb" style="left:47.6px;top:71.4px"></div><div class="t" style="left:63.0px;top:70.4px;font-size:9.8px;transform:scaleX(0.8298);transform-origin:0 0;">2022120816...</div><div class="cb" style="left:124px;top:71.4px"></div><div class="cb" style="left:47.6px;top:82.8px"></div><div class="t" style="left:63.0px;top:81.8px;font-size:9.8px;transform:scaleX(0.8298);transform-origin:0 0;">2022120816...</div><div class="cb" style="left:124px;top:82.8px"></div><div class="cb" style="left:47.6px;top:94.2px"></div><div class="t" style="left:63.0px;top:93.2px;font-size:9.8px;transform:scaleX(0.8495);transform-origin:0 0;">2022121116...</div><div class="cb" style="left:124px;top:94.2px"></div><div class="cb" style="left:47.6px;top:105.6px"></div><div class="t" style="left:63.0px;top:104.6px;font-size:9.8px;transform:scaleX(0.8298);transform-origin:0 0;">2022121916...</div><div class="cb" style="left:124px;top:105.6px"></div><div class="ar ard" style="left:3.5px;top:120.53499999999997px"></div><div class="cbp" style="left:17.0px;top:117.0px"></div><div class="t" style="left:32.4px;top:116.0px;font-size:9.8px;transform:scaleX(0.8869);transform-origin:0 0;">Images</div><div class="cb" style="left:124px;top:117.0px"></div><div class="ar ard" style="left:19.600000000000023px;top:131.95px"></div><div class="cbp" style="left:32.2px;top:128.4px"></div><svg class="abs" style="left:46px;top:127.44999999999999px" width="14" height="12" viewBox="0 0 14 12"><path d="M1 4 L7 1 L13 4 L7 7 Z" fill="#f1f1f1" stroke="#bdbdbd" stroke-width="0.8"/><path d="M1 4 V8 L7 11 V7 Z" fill="#d9d9d9" stroke="#bdbdbd" stroke-width="0.8"/><path d="M13 4 V8 L7 11 V7 Z" fill="#c6c6c6" stroke="#bdbdbd" stroke-width="0.8"/></svg><div class="t" style="left:64.2px;top:127.4px;font-size:9.8px;transform:scaleX(0.7880);transform-origin:0 0;">TX_BB_z13_AT</div><div class="cb" style="left:124px;top:128.4px"></div><div class="ar arr" style="left:36.0px;top:141.865px"></div><div class="cbp" style="left:47.6px;top:139.9px"></div><div class="t" style="left:63.0px;top:138.9px;font-size:9.8px;transform:scaleX(0.8876);transform-origin:0 0;">Overviews</div><div class="cb" style="left:124px;top:139.9px"></div><div class="cb" style="left:47.6px;top:151.3px"></div><svg class="abs" style="left:47.60000000000002px;top:151.27999999999997px" width="10" height="10" viewBox="0 0 10 10"><path d="M2 5 L4.2 7.6 L8 2" fill="none" stroke="#000" stroke-width="1.5"/></svg><svg class="abs" style="left:63px;top:151.27999999999997px" width="12" height="10" viewBox="0 0 12 10"><path d="M0 5 H3" stroke="#e05050" stroke-width="0.8" stroke-dasharray="1 0.8"/><path d="M11.6 5 C11.6 4.4 10.8 4.2 10 4.2 H7.6 L5 0.4 H3.8 L5.2 4.2 H3.2 L2.2 2.8 H1.4 L1.9 5 L1.4 7.2 H2.2 L3.2 5.8 H5.2 L3.8 9.6 H5 L7.6 5.8 H10 C10.8 5.8 11.6 5.6 11.6 5 Z" fill="#19b0b0"/></svg><div class="t" style="left:79.6px;top:150.3px;font-size:9.8px;transform:scaleX(0.8423);transform-origin:0 0;">2022112...</div><div class="cb" style="left:124px;top:151.3px"></div><div class="cb" style="left:47.6px;top:162.7px"></div><svg class="abs" style="left:47.60000000000002px;top:162.695px" width="10" height="10" viewBox="0 0 10 10"><path d="M2 5 L4.2 7.6 L8 2" fill="none" stroke="#000" stroke-width="1.5"/></svg><svg class="abs" style="left:63px;top:162.695px" width="12" height="10" viewBox="0 0 12 10"><path d="M0 5 H3" stroke="#e05050" stroke-width="0.8" stroke-dasharray="1 0.8"/><path d="M11.6 5 C11.6 4.4 10.8 4.2 10 4.2 H7.6 L5 0.4 H3.8 L5.2 4.2 H3.2 L2.2 2.8 H1.4 L1.9 5 L1.4 7.2 H2.2 L3.2 5.8 H5.2 L3.8 9.6 H5 L7.6 5.8 H10 C10.8 5.8 11.6 5.6 11.6 5 Z" fill="#19b0b0"/></svg><div class="t" style="left:79.6px;top:161.7px;font-size:9.8px;transform:scaleX(0.8291);transform-origin:0 0;">2022120...</div><div class="cb" style="left:124px;top:162.7px"></div><div class="cb" style="left:47.6px;top:174.1px"></div><svg class="abs" style="left:47.60000000000002px;top:174.11px" width="10" height="10" viewBox="0 0 10 10"><path d="M2 5 L4.2 7.6 L8 2" fill="none" stroke="#000" stroke-width="1.5"/></svg><svg class="abs" style="left:63px;top:174.11px" width="12" height="10" viewBox="0 0 12 10"><path d="M0 5 H3" stroke="#e05050" stroke-width="0.8" stroke-dasharray="1 0.8"/><path d="M11.6 5 C11.6 4.4 10.8 4.2 10 4.2 H7.6 L5 0.4 H3.8 L5.2 4.2 H3.2 L2.2 2.8 H1.4 L1.9 5 L1.4 7.2 H2.2 L3.2 5.8 H5.2 L3.8 9.6 H5 L7.6 5.8 H10 C10.8 5.8 11.6 5.6 11.6 5 Z" fill="#19b0b0"/></svg><div class="t" style="left:79.6px;top:173.1px;font-size:9.8px;transform:scaleX(0.8291);transform-origin:0 0;">2022120...</div><div class="cb" style="left:124px;top:174.1px"></div><div class="cb" style="left:47.6px;top:185.5px"></div><svg class="abs" style="left:47.60000000000002px;top:185.52499999999998px" width="10" height="10" viewBox="0 0 10 10"><path d="M2 5 L4.2 7.6 L8 2" fill="none" stroke="#000" stroke-width="1.5"/></svg><svg class="abs" style="left:63px;top:185.52499999999998px" width="12" height="10" viewBox="0 0 12 10"><path d="M0 5 H3" stroke="#e05050" stroke-width="0.8" stroke-dasharray="1 0.8"/><path d="M11.6 5 C11.6 4.4 10.8 4.2 10 4.2 H7.6 L5 0.4 H3.8 L5.2 4.2 H3.2 L2.2 2.8 H1.4 L1.9 5 L1.4 7.2 H2.2 L3.2 5.8 H5.2 L3.8 9.6 H5 L7.6 5.8 H10 C10.8 5.8 11.6 5.6 11.6 5 Z" fill="#19b0b0"/></svg><div class="t" style="left:79.6px;top:184.5px;font-size:9.8px;transform:scaleX(0.8291);transform-origin:0 0;">2022120...</div><div class="cb" style="left:124px;top:185.5px"></div><div class="cb" style="left:47.6px;top:196.9px"></div><svg class="abs" style="left:47.60000000000002px;top:196.94px" width="10" height="10" viewBox="0 0 10 10"><path d="M2 5 L4.2 7.6 L8 2" fill="none" stroke="#000" stroke-width="1.5"/></svg><svg class="abs" style="left:63px;top:196.94px" width="12" height="10" viewBox="0 0 12 10"><path d="M0 5 H3" stroke="#e05050" stroke-width="0.8" stroke-dasharray="1 0.8"/><path d="M11.6 5 C11.6 4.4 10.8 4.2 10 4.2 H7.6 L5 0.4 H3.8 L5.2 4.2 H3.2 L2.2 2.8 H1.4 L1.9 5 L1.4 7.2 H2.2 L3.2 5.8 H5.2 L3.8 9.6 H5 L7.6 5.8 H10 C10.8 5.8 11.6 5.6 11.6 5 Z" fill="#19b0b0"/></svg><div class="t" style="left:79.6px;top:195.9px;font-size:9.8px;transform:scaleX(0.8291);transform-origin:0 0;">2022121...</div><div class="cb" style="left:124px;top:196.9px"></div><div class="cb" style="left:47.6px;top:208.4px"></div><svg class="abs" style="left:47.60000000000002px;top:208.35499999999996px" width="10" height="10" viewBox="0 0 10 10"><path d="M2 5 L4.2 7.6 L8 2" fill="none" stroke="#000" stroke-width="1.5"/></svg><svg class="abs" style="left:63px;top:208.35499999999996px" width="12" height="10" viewBox="0 0 12 10"><path d="M0 5 H3" stroke="#e05050" stroke-width="0.8" stroke-dasharray="1 0.8"/><path d="M11.6 5 C11.6 4.4 10.8 4.2 10 4.2 H7.6 L5 0.4 H3.8 L5.2 4.2 H3.2 L2.2 2.8 H1.4 L1.9 5 L1.4 7.2 H2.2 L3.2 5.8 H5.2 L3.8 9.6 H5 L7.6 5.8 H10 C10.8 5.8 11.6 5.6 11.6 5 Z" fill="#19b0b0"/></svg><div class="t" style="left:79.6px;top:207.4px;font-size:9.8px;transform:scaleX(0.8291);transform-origin:0 0;">2022121...</div><div class="cb" style="left:124px;top:208.4px"></div><div class="cb" style="left:17.0px;top:219.8px"></div><div class="t" style="left:32.4px;top:218.8px;font-size:9.8px;transform:scaleX(0.8747);transform-origin:0 0;">Lidar QC</div><div class="cb" style="left:124px;top:219.8px"></div><div class="cb" style="left:17.0px;top:231.2px"></div><svg class="abs" style="left:17px;top:231.185px" width="10" height="10" viewBox="0 0 10 10"><path d="M2 5 L4.2 7.6 L8 2" fill="none" stroke="#000" stroke-width="1.5"/></svg><div class="t" style="left:32.4px;top:230.2px;font-size:9.8px;transform:scaleX(0.9059);transform-origin:0 0;">QC Polygons</div><div class="cb" style="left:124px;top:231.2px"></div><div class="cb" style="left:17.0px;top:242.6px"></div><svg class="abs" style="left:17px;top:242.59999999999997px" width="10" height="10" viewBox="0 0 10 10"><path d="M2 5 L4.2 7.6 L8 2" fill="none" stroke="#000" stroke-width="1.5"/></svg><div class="t" style="left:32.4px;top:241.6px;font-size:9.8px;transform:scaleX(0.8677);transform-origin:0 0;">AOIs</div><div class="cb" style="left:124px;top:242.6px"></div><div class="cb" style="left:17.0px;top:254.0px"></div><svg class="abs" style="left:17px;top:254.015px" width="10" height="10" viewBox="0 0 10 10"><path d="M2 5 L4.2 7.6 L8 2" fill="none" stroke="#000" stroke-width="1.5"/></svg><div class="t" style="left:32.4px;top:253.0px;font-size:9.8px;transform:scaleX(0.8742);transform-origin:0 0;">Overlays</div><div class="cb" style="left:124px;top:254.0px"></div><svg class="abs" style="left:124px;top:254.015px" width="10" height="10" viewBox="0 0 10 10"><path d="M2 5 L4.2 7.6 L8 2" fill="none" stroke="#000" stroke-width="1.5"/></svg><div class="cb" style="left:17.0px;top:265.4px"></div><svg class="abs" style="left:17px;top:265.43px" width="10" height="10" viewBox="0 0 10 10"><path d="M2 5 L4.2 7.6 L8 2" fill="none" stroke="#000" stroke-width="1.5"/></svg><div class="t" style="left:32.4px;top:264.4px;font-size:9.8px;transform:scaleX(0.9163);transform-origin:0 0;">Ground Points</div><div class="cb" style="left:124px;top:265.4px"></div><svg class="abs" style="left:124px;top:265.43px" width="10" height="10" viewBox="0 0 10 10"><path d="M2 5 L4.2 7.6 L8 2" fill="none" stroke="#000" stroke-width="1.5"/></svg><div class="ar arr" style="left:5.0px;top:278.84499999999997px"></div><div class="cb" style="left:17.0px;top:276.8px"></div><svg class="abs" style="left:17px;top:276.84499999999997px" width="10" height="10" viewBox="0 0 10 10"><path d="M2 5 L4.2 7.6 L8 2" fill="none" stroke="#000" stroke-width="1.5"/></svg><div class="t" style="left:32.4px;top:275.8px;font-size:9.8px;transform:scaleX(0.9216);transform-origin:0 0;">Background</div><div class="cb" style="left:124px;top:276.8px"></div><svg class="abs" style="left:124px;top:276.84499999999997px" width="10" height="10" viewBox="0 0 10 10"><path d="M2 5 L4.2 7.6 L8 2" fill="none" stroke="#000" stroke-width="1.5"/></svg></div><div class="abs" style="left:775px;top:695px;width:43px;height:18px;background:#fff;border:1px solid #c8c8c8;border-top:none;border-radius:0 0 2px 2px"></div><div class="t" style="left:783.0px;top:698.2px;font-size:9.8px;transform:scaleX(0.8364);transform-origin:0 0;">Layers</div><div class="abs" style="left:818px;top:695px;width:40px;height:16px;background:#e2e2e2;border:1px solid #c8c8c8;border-top:none;border-radius:0 0 2px 2px"></div><div class="t" style="left:825.5px;top:697.4px;font-size:9.8px;transform:scaleX(0.8622);transform-origin:0 0;">Filters</div><div class="abs" style="left:0;top:23px;width:1px;height:708px;background:#0078d7"></div><div class="abs" style="left:974px;top:23px;width:1px;height:708px;background:#0078d7"></div><div class="abs" style="left:0;top:730px;width:975px;height:1px;background:#0078d7"></div><div class="abs" style="left:171.8px;top:393.4px;width:1px;height:1px;background:#cfcfcf"></div><div class="abs" style="left:171.8px;top:395.8px;width:1px;height:1px;background:#cfcfcf"></div><div class="abs" style="left:171.8px;top:398.2px;width:1px;height:1px;background:#cfcfcf"></div><div class="abs" style="left:171.8px;top:400.6px;width:1px;height:1px;background:#cfcfcf"></div><div class="abs" style="left:171.8px;top:403.0px;width:1px;height:1px;background:#cfcfcf"></div><div class="abs" style="left:171.8px;top:405.4px;width:1px;height:1px;background:#cfcfcf"></div><div class="abs" style="left:772px;top:393.4px;width:1px;height:1px;background:#cfcfcf"></div><div class="abs" style="left:772px;top:395.8px;width:1px;height:1px;background:#cfcfcf"></div><div class="abs" style="left:772px;top:398.2px;width:1px;height:1px;background:#cfcfcf"></div><div class="abs" style="left:772px;top:400.6px;width:1px;height:1px;background:#cfcfcf"></div><div class="abs" style="left:772px;top:403.0px;width:1px;height:1px;background:#cfcfcf"></div><div class="abs" style="left:772px;top:405.4px;width:1px;height:1px;background:#cfcfcf"></div><svg class="abs" style="left:962px;top:718px" width="11" height="11"><rect x="8.0" y="8.0" width="1.2" height="1.2" fill="#b8b8b8"/><rect x="8.0" y="5.5" width="1.2" height="1.2" fill="#b8b8b8"/><rect x="8.0" y="3.0" width="1.2" height="1.2" fill="#b8b8b8"/><rect x="8.0" y="0.5" width="1.2" height="1.2" fill="#b8b8b8"/><rect x="5.5" y="8.0" width="1.2" height="1.2" fill="#b8b8b8"/><rect x="5.5" y="5.5" width="1.2" height="1.2" fill="#b8b8b8"/><rect x="5.5" y="3.0" width="1.2" height="1.2" fill="#b8b8b8"/><rect x="3.0" y="8.0" width="1.2" height="1.2" fill="#b8b8b8"/><rect x="3.0" y="5.5" width="1.2" height="1.2" fill="#b8b8b8"/><rect x="0.5" y="8.0" width="1.2" height="1.2" fill="#b8b8b8"/></svg></body></html>
